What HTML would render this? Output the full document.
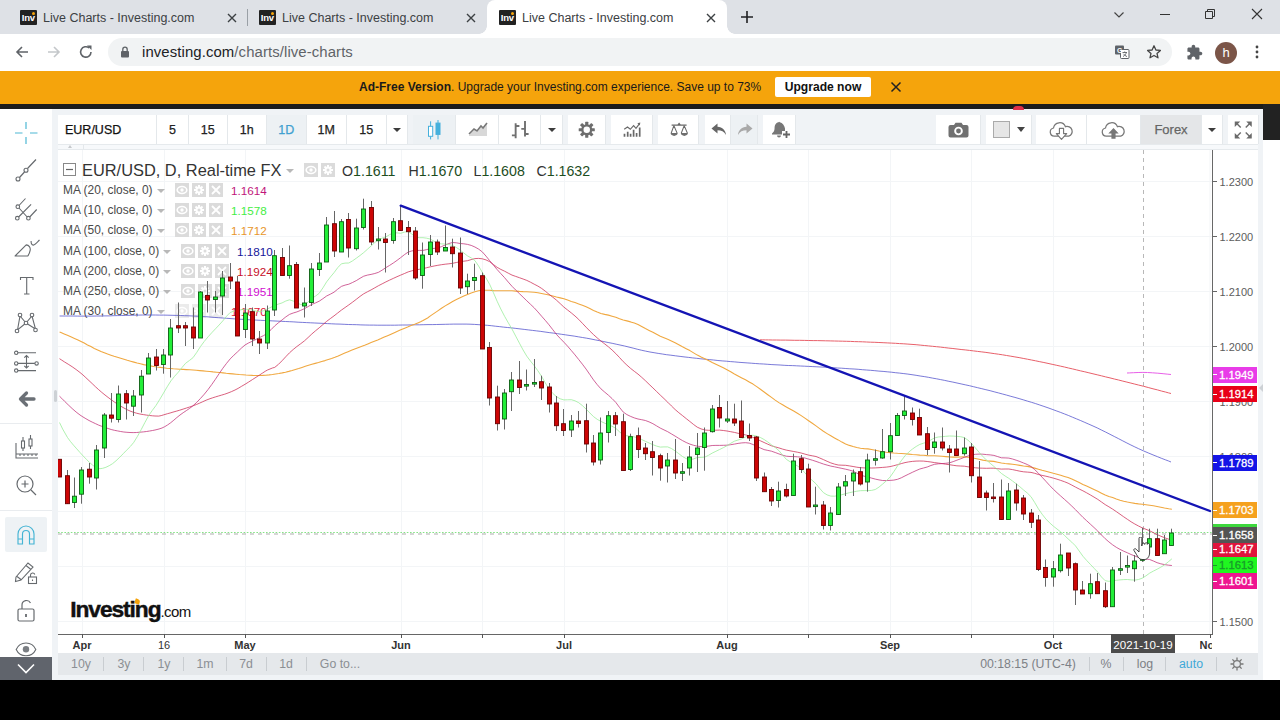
<!DOCTYPE html>
<html><head><meta charset="utf-8"><title>Live Charts - Investing.com</title>
<style>
*{box-sizing:border-box}
html,body{margin:0;padding:0}
body{width:1280px;height:720px;overflow:hidden;position:relative;background:#fff;font-family:"Liberation Sans",sans-serif;color:#333}
.abs{position:absolute}
/* browser chrome */
#tabs{left:0;top:0;width:1280px;height:34px;background:#dee1e6}
.tab{position:absolute;top:0;height:34px;width:240px}
.tab .fav{position:absolute;left:12px;top:9.5px;width:16.5px;height:15.5px;background:#222;border-radius:1px;color:#fff;font-size:9.5px;font-weight:bold;line-height:16px;letter-spacing:-.6px;text-align:center;letter-spacing:-.3px}
.tab .fav i{position:absolute;right:2px;top:2px;width:3px;height:3px;background:#f5a30a;border-radius:2px}
.tab .tt{position:absolute;left:35px;top:10.5px;font-size:12.5px;color:#3c4043;white-space:nowrap}
.tab .x{position:absolute;left:218px;top:11.5px;width:12px;height:12px}
.tab.act{background:#fff;border-radius:8px 8px 0 0}
#addr{left:0;top:34px;width:1280px;height:37px;background:#fff}
#pill{left:108px;top:38px;width:1064px;height:28px;border-radius:14px;background:#f1f3f4}
#url{left:142px;top:43.5px;font-size:14.9px;color:#5f6368;white-space:nowrap;letter-spacing:.1px}
#url b{font-weight:normal;color:#202124}
#banner{left:0;top:71px;width:1280px;height:33px;background:#f5a40c}
#banner .t{position:absolute;left:359px;top:9px;font-size:12px;color:#1a1a1a;white-space:nowrap}
#banner .btn{position:absolute;left:775px;top:6px;width:96px;height:20px;background:#fff;border-radius:2px;font-size:12.1px;font-weight:bold;color:#111;text-align:center;line-height:20px}
#black{left:0;top:104px;width:1280px;height:5px;background:#1c1c1c}
#dark2{left:1263px;top:104px;width:17px;height:36px;background:#222}
#bottomblack{left:0;top:680px;width:1280px;height:40px;background:#000}
/* widget */
#widget{left:0;top:109px;width:1263px;height:571px;background:#f0f3f6}
#side{left:0;top:109px;width:52px;height:571px;background:#fff}
#sidebtn{left:0;top:657px;width:52px;height:23px;background:#60646c}
.tb{position:absolute;top:115px;height:29px;background:#fff;border-right:1px solid #e4e8eb}
.tb.sel{background:#edf1f4}
.tb span{position:absolute;left:0;right:0;top:8px;text-align:center;font-size:12.5px;color:#222;-webkit-text-stroke:.25px currentColor}
#chartbg{left:58px;top:150px;width:1200px;height:503px;background:#fff}
#axisline{left:1212px;top:150px;width:1px;height:484px;background:#686868}
#timeline{left:58px;top:633.5px;width:1155px;height:1.5px;background:#666}
.pl{position:absolute;left:1219.5px;font-size:11px;color:#5c5c5c;white-space:nowrap}
.tick{position:absolute;left:1213px;width:4px;height:1px;background:#666}
.tag{position:absolute;left:1213px;width:44px;height:16px;color:#fff;font-size:11.3px;line-height:16px;padding-left:6px;white-space:nowrap;-webkit-text-stroke:.3px currentColor}
.tag:before{content:'';position:absolute;left:0;top:7.5px;width:3.5px;height:1px;background:currentColor}
.tl{position:absolute;top:639px;font-size:11px;color:#333;white-space:nowrap;transform:translateX(-50%)}
.tl.b{font-weight:bold}
.ttick{position:absolute;top:634px;width:1px;height:4px;background:#555}
#botbar{left:58px;top:653px;width:1200px;height:22px;background:#e5e8eb}
#botbar span{position:absolute;top:4px;font-size:12.3px;color:#8b8f94;white-space:nowrap;transform:translateX(-50%)}
#botbar i{position:absolute;top:4px;width:1px;height:14px;background:#c9cdd1}
.lg{position:absolute;left:60px;height:19px;white-space:nowrap;font-size:11.95px;color:#4a4a4a;line-height:19px;padding-left:3px}
.lg .v{position:absolute;top:0}
.ic{position:absolute;top:2px;width:14px;height:14px;background:#dbdbdb}
.ic svg{display:block}
.ic.f{opacity:.55}
.dd{position:absolute;top:8px;width:0;height:0;border-left:4px solid transparent;border-right:4px solid transparent;border-top:4px solid #b8b8b8}
</style></head><body>
<div id="tabs" class="abs">
 <div class="tab" style="left:8px"><div class="fav">Inv<i></i></div><div class="tt">Live Charts - Investing.com</div><svg class="x" viewBox="0 0 12 12"><path d="M2 2L10 10M10 2L2 10" stroke="#3c4043" stroke-width="1.4"/></svg></div>
 <div class="tab" style="left:247px"><div class="fav">Inv<i></i></div><div class="tt">Live Charts - Investing.com</div><svg class="x" viewBox="0 0 12 12"><path d="M2 2L10 10M10 2L2 10" stroke="#3c4043" stroke-width="1.4"/></svg></div>
 <div class="abs" style="left:247px;top:9px;width:1px;height:17px;background:#9aa0a6"></div>
 <div class="tab act" style="left:487px"><div class="fav">Inv<i></i></div><div class="tt">Live Charts - Investing.com</div><svg class="x" viewBox="0 0 12 12"><path d="M2 2L10 10M10 2L2 10" stroke="#3c4043" stroke-width="1.4"/></svg></div>
 <div class="abs" style="left:479px;top:26px;width:8px;height:8px;background:radial-gradient(circle at 0 0,#dee1e6 7.5px,#fff 8px)"></div><div class="abs" style="left:727px;top:26px;width:8px;height:8px;background:radial-gradient(circle at 100% 0,#dee1e6 7.5px,#fff 8px)"></div>
 <svg class="abs" style="left:739px;top:9px" width="16" height="16" viewBox="0 0 16 16"><path d="M8 2V14M2 8H14" stroke="#202124" stroke-width="1.6"/></svg>
 <svg class="abs" style="left:1113px;top:9px" width="12" height="12" viewBox="0 0 12 12"><path d="M1.5 3.5L6 8L10.5 3.5" stroke="#444" stroke-width="1.2" fill="none"/></svg>
 <div class="abs" style="left:1160px;top:14px;width:10px;height:1px;background:#333"></div>
 <svg class="abs" style="left:1204px;top:8px" width="12" height="12" viewBox="0 0 12 12"><path d="M1.5 3.5H8.5V10.5H1.5ZM3.5 3.5V1.5H10.5V8.5H8.5" stroke="#333" stroke-width="1" fill="none"/></svg>
 <svg class="abs" style="left:1251px;top:8px" width="12" height="12" viewBox="0 0 12 12"><path d="M1 1L11 11M11 1L1 11" stroke="#333" stroke-width="1.1"/></svg>
</div>
<div id="addr" class="abs"></div>
<svg class="abs" style="left:14px;top:44px" width="16" height="16" viewBox="0 0 16 16"><path d="M14 8H3M8 3L3 8L8 13" stroke="#5f6368" stroke-width="1.6" fill="none"/></svg>
<svg class="abs" style="left:46px;top:44px" width="16" height="16" viewBox="0 0 16 16"><path d="M2 8H13M8 3L13 8L8 13" stroke="#c4c7ca" stroke-width="1.6" fill="none"/></svg>
<svg class="abs" style="left:78px;top:44px" width="16" height="16" viewBox="0 0 16 16"><path d="M13 8A5.2 5.2 0 1 1 11.2 4" stroke="#5f6368" stroke-width="1.6" fill="none"/><path d="M9 1.5H13.5V6Z" fill="#5f6368"/></svg>
<div id="pill" class="abs"></div>
<svg class="abs" style="left:120px;top:46px" width="10" height="12" viewBox="0 0 10 12"><rect x="1" y="5" width="8" height="6.5" rx="1" fill="#5f6368"/><path d="M2.8 5V3.4a2.2 2.2 0 0 1 4.4 0V5" stroke="#5f6368" stroke-width="1.3" fill="none"/></svg>
<div id="url" class="abs"><b>investing.com</b>/charts/live-charts</div>
<svg class="abs" style="left:1114px;top:44px" width="16" height="16" viewBox="0 0 16 16"><rect x="1" y="1.5" width="9" height="9" rx="1" fill="#5f6368"/><rect x="6.5" y="5.5" width="8.5" height="9" rx="1" fill="#fff" stroke="#5f6368" stroke-width="1"/><text x="3" y="9" font-size="7" fill="#fff" font-family="Liberation Sans" font-weight="bold">G</text><path d="M8.5 8.5H13M10.7 7.5V8.5M9 12.5C11 11.5 12 10 12.3 8.5M9.5 9.8C10.3 11 11.5 12 13 12.6" stroke="#5f6368" stroke-width=".9" fill="none"/></svg>
<svg class="abs" style="left:1146px;top:44px" width="16" height="16" viewBox="0 0 16 16"><path d="M8 1.8L9.9 6l4.5.4-3.4 3 1 4.4L8 11.5 4 13.8l1-4.4-3.4-3L6.1 6Z" stroke="#444" stroke-width="1.3" fill="none" stroke-linejoin="round"/></svg>
<svg class="abs" style="left:1185.5px;top:43.5px" width="17" height="17" viewBox="0 0 24 24"><path d="M20.5 11H19V7c0-1.100-.9-2-2-2h-4V3.500C13 2.120 11.880 1 10.500 1S8 2.120 8 3.500V5H4c-1.100 0-1.990.9-1.990 2v3.800H3.500c1.490 0 2.700 1.210 2.700 2.700s-1.210 2.700-2.700 2.700H2V20c0 1.100.9 2 2 2h3.800v-1.500c0-1.490 1.210-2.700 2.700-2.700 1.490 0 2.700 1.210 2.700 2.700V22H17c1.100 0 2-.9 2-2v-4h1.500c1.380 0 2.500-1.120 2.500-2.500S21.880 11 20.500 11z" fill="#5f6368"/></svg>
<div class="abs" style="left:1215px;top:41.5px;width:22px;height:22px;border-radius:11px;background:#7b5548;color:#fff;font-size:13px;text-align:center;line-height:21px">h</div>
<svg class="abs" style="left:1254px;top:44px" width="6" height="16" viewBox="0 0 6 16"><circle cx="3" cy="3" r="1.4" fill="#444"/><circle cx="3" cy="8" r="1.4" fill="#444"/><circle cx="3" cy="13" r="1.4" fill="#444"/></svg>
<div id="banner" class="abs"><div class="t"><b>Ad-Free Version</b>. Upgrade your Investing.com experience. Save up to 73%</div><div class="btn">Upgrade now</div>
<svg class="abs" style="left:890px;top:10px" width="12" height="12" viewBox="0 0 12 12"><path d="M1.5 1.5L10.5 10.5M10.5 1.5L1.5 10.5" stroke="#222" stroke-width="1.5"/></svg></div>
<div id="black" class="abs"></div>
<div id="dark2" class="abs"></div>
<div id="widget" class="abs"></div>
<div id="side" class="abs"></div>
<div id="chartbg" class="abs"></div>

<div class="tb" style="left:58px;width:99px;"><span style="text-align:left;left:7px;font-size:12.5px;color:#111">EUR/USD</span></div>
<div class="tb" style="left:157px;width:32px;"><span>5</span></div>
<div class="tb" style="left:189px;width:38.5px;"><span>15</span></div>
<div class="tb" style="left:227.5px;width:39.5px;"><span>1h</span></div>
<div class="tb sel" style="left:267px;width:39.5px;"><span style="color:#3fa0d0">1D</span></div>
<div class="tb" style="left:306.5px;width:40.5px;"><span>1M</span></div>
<div class="tb" style="left:347px;width:39.5px;"><span>15</span></div>
<div class="tb" style="left:386.5px;width:21px;"><div style="position:absolute;left:50%;top:12.5px;margin-left:-4px;width:0;height:0;border-left:4px solid transparent;border-right:4px solid transparent;border-top:4.2px solid #3c3c3c"></div></div>
<div class="tb sel" style="left:413px;width:42.5px;"><svg style="position:absolute;left:0;top:0" width="42" height="29" viewBox="0 0 42 29"><path d="M17.6 6.300V11.300M17.600 21.200V24.400M25 5V8M25 19.400V24.400" stroke="#45b0dc" stroke-width="1"/><rect x="15.500" y="11.300" width="4.200" height="10" fill="#fff" stroke="#45b0dc" stroke-width="1"/><rect x="23" y="8.100" width="4" height="11.300" fill="#45b0dc" stroke="#45b0dc" stroke-width="1"/></svg></div>
<div class="tb" style="left:455.5px;width:43px;"><svg style="position:absolute;left:12px;top:7px" width="20" height="16" viewBox="0 0 20 16"><path d="M1 13L6 8L9 10L13 5L15 7L19 2V14H1Z" fill="#d8d8d8"/><path d="M1 12L6 7L9 9L13 4L15 6L19 1" stroke="#777" stroke-width="1.6" fill="none"/></svg></div>
<div class="tb" style="left:498.5px;width:42.5px;"><svg style="position:absolute;left:0;top:0" width="42" height="29" viewBox="0 0 42 29"><path d="M16.650 8.200V23.300M16.650 11H20.400M12.900 20.400H16.650M26 5.900V21.400M22.300 13.900H26M26 19H29.600" stroke="#707070" stroke-width="1.9" fill="none"/></svg></div>
<div class="tb" style="left:541px;width:22px;"><div style="position:absolute;left:50%;top:12.5px;margin-left:-4px;width:0;height:0;border-left:4px solid transparent;border-right:4px solid transparent;border-top:4.2px solid #3c3c3c"></div></div>
<div class="tb" style="left:567.5px;width:38px;"><svg style="position:absolute;left:10.2px;top:5.9px" width="17.5" height="17.5" viewBox="0 0 20 20"><g fill="#6e6e6e"><circle cx="10" cy="10" r="6.3"/><rect x="8.2" y="0.8" width="3.6" height="18.4" rx="0.6" transform="rotate(0 10 10)"/><rect x="8.2" y="0.8" width="3.6" height="18.4" rx="0.6" transform="rotate(45 10 10)"/><rect x="8.2" y="0.8" width="3.6" height="18.4" rx="0.6" transform="rotate(90 10 10)"/><rect x="8.2" y="0.8" width="3.6" height="18.4" rx="0.6" transform="rotate(135 10 10)"/></g><circle cx="10" cy="10" r="3.700" fill="#fff"/></svg></div>
<div class="tb" style="left:610.5px;width:42px;"><svg style="position:absolute;left:0;top:0" width="42" height="29" viewBox="0 0 42 29"><path d="M13.500 21.800V18.700M16.700 21.800V16.700M19.600 21.800V18.700M22.600 21.800V14.800M25.600 21.800V18.100M28.700 21.800V12.500" stroke="#686868" stroke-width="1.700"/><path d="M13.200 14.300L16.500 12L19.300 14.300L22.600 10.600L25 13.400L28.700 8.300" stroke="#686868" stroke-width="1.150" fill="none"/><path d="M26.300 8.200L29.300 7.500L28.900 10.600Z" fill="#686868"/></svg></div>
<div class="tb" style="left:657.5px;width:41.5px;"><svg style="position:absolute;left:0;top:0" width="42" height="29" viewBox="0 0 42 29"><path d="M13.600 10.100H28.600M19.800 10.100L21.100 8.500L22.400 10.100" stroke="#686868" stroke-width="1.200" fill="none"/><path d="M15.900 10.600L13.200 18.100M15.900 10.600L19.100 18.100M26.200 10.600L23.300 18.100M26.200 10.600L29.400 18.100" stroke="#686868" stroke-width="1.100" fill="none"/><path d="M12.600 18.100H19.700C19.700 21.800 12.600 21.800 12.600 18.100ZM22.800 18.100H29.900C29.900 21.800 22.800 21.800 22.800 18.100Z" fill="#6e6e6e"/></svg></div>
<div class="tb" style="left:704.5px;width:26px;"><svg style="position:absolute;left:6px;top:8px" width="16" height="13" viewBox="0 0 16 13"><path d="M6.5 0.5L0.5 5.5L6.5 10.5V7.3C10.5 7.3 13 8.7 15 12C14.6 7.2 11.5 4 6.5 3.7Z" fill="#666"/></svg></div>
<div class="tb sel" style="left:730.5px;width:27px;"><svg style="position:absolute;left:6px;top:8px" width="16" height="13" viewBox="0 0 16 13"><path d="M9.5 0.5L15.5 5.5L9.5 10.5V7.3C5.5 7.3 3 8.7 1 12C1.4 7.2 4.5 4 9.5 3.7Z" fill="#a9a9a9"/></svg></div>
<div class="tb" style="left:762.5px;width:33px;"><svg style="position:absolute;left:8px;top:6px" width="20" height="18" viewBox="0 0 20 18"><path d="M7.5 1.2C4.5 1.8 3.6 4.5 3.6 7C3.6 10 2.4 11.3 1 12.6V13.6H11V10H14V7.5C13.6 4.5 11.5 1.8 8.8 1.2A0.9 0.9 0 0 0 7.5 1.2Z" fill="#777"/><path d="M6 14.6A2 2 0 0 0 10 14.6Z" fill="#777"/><path d="M15.5 10V17M12 13.5H19" stroke="#666" stroke-width="1.8"/></svg></div>
<div class="tb" style="left:935.5px;width:45px;"><svg style="position:absolute;left:12px;top:7px" width="21" height="16" viewBox="0 0 21 16"><path d="M2.5 3H6L7.5 0.8H13.5L15 3H18.5A2 2 0 0 1 20.5 5V13.5A2 2 0 0 1 18.5 15.5H2.5A2 2 0 0 1 .5 13.5V5A2 2 0 0 1 2.5 3Z" fill="#707070"/><circle cx="10.5" cy="9" r="4.3" fill="#fff"/><circle cx="10.5" cy="9" r="2.4" fill="#707070"/></svg></div>
<div class="tb" style="left:985.5px;width:46px;"><div style="position:absolute;left:7px;top:6px;width:17px;height:17px;background:#e6e6e6;border:1px solid #aaa"></div><div style="position:absolute;left:31px;top:12px;width:0;height:0;border-left:4.5px solid transparent;border-right:4.5px solid transparent;border-top:5px solid #444"></div></div>
<div class="tb" style="left:1036px;width:51px;"><svg style="position:absolute;left:12px;top:5px" width="27" height="21" viewBox="0 0 26 20"><path d="M6 15.5A4 4 0 0 1 5.3 7.6A6 6 0 0 1 16.8 6.3A4.7 4.7 0 0 1 20 15.5Z" fill="#fff" stroke="#777" stroke-width="1.2"/><path d="M11 8H15V13H18L13 18.5L8 13H11Z" fill="#fff" stroke="#777" stroke-width="1.1" stroke-linejoin="round"/></svg></div>
<div class="tb" style="left:1087px;width:54px;"><svg style="position:absolute;left:13px;top:5px" width="27" height="21" viewBox="0 0 26 20"><path d="M6 15.5A4 4 0 0 1 5.3 7.6A6 6 0 0 1 16.8 6.3A4.7 4.7 0 0 1 20 15.5Z" fill="#fff" stroke="#777" stroke-width="1.2"/><path d="M11 18V13H8L13 7.5L18 13H15V18Z" fill="#777"/></svg></div>
<div class="tb sel" style="left:1141px;width:61px;background:#e4e6e8;"><span style="color:#666;font-size:13px;top:7px">Forex</span></div>
<div class="tb" style="left:1202px;width:21px;"><div style="position:absolute;left:50%;top:12.5px;margin-left:-4px;width:0;height:0;border-left:4px solid transparent;border-right:4px solid transparent;border-top:4.2px solid #3c3c3c"></div></div>
<div class="tb" style="left:1227.5px;width:31.5px;"><svg style="position:absolute;left:6.500px;top:6px" width="18.500" height="18" viewBox="0 0 18 18"><g fill="#6a6a6a" stroke="#6a6a6a" stroke-width="1.500"><path d="M0.500 0.500H6L0.500 6Z" stroke="none"/><path d="M2.500 2.500L6.500 6.500"/><path d="M17.500 0.500H12L17.500 6Z" stroke="none"/><path d="M15.500 2.500L11.500 6.500"/><path d="M0.500 17.500H6L0.500 12Z" stroke="none"/><path d="M2.500 15.500L6.500 11.500"/><path d="M17.500 17.500H12L17.500 12Z" stroke="none"/><path d="M15.500 15.500L11.500 11.500"/></g></svg></div>
<div class="abs" style="left:58px;top:144px;width:1200px;height:6px;background:#f7f9fb;border-top:1px solid #e6eaed;border-bottom:1px solid #e6eaed"></div>
<div class="abs" style="left:83px;top:145px;width:1px;height:4px;background:#e4e8eb"></div>
<div class="abs" style="left:67.500px;top:145.300px;width:0;height:0;border-left:2.800px solid transparent;border-right:2.800px solid transparent;border-bottom:3.400px solid #c6c9cc"></div>
<div id="axisline" class="abs"></div><div id="timeline" class="abs"></div>
<div class="pl" style="top:175.5px">1.2300</div><div class="tick" style="top:181px"></div>
<div class="pl" style="top:230.5px">1.2200</div><div class="tick" style="top:236px"></div>
<div class="pl" style="top:285.5px">1.2100</div><div class="tick" style="top:291px"></div>
<div class="pl" style="top:340.5px">1.2000</div><div class="tick" style="top:346px"></div>
<div class="pl" style="top:395.5px">1.1900</div><div class="tick" style="top:401px"></div>
<div class="pl" style="top:450.5px">1.1800</div><div class="tick" style="top:456px"></div>
<div class="pl" style="top:615.5px">1.1500</div><div class="tick" style="top:621px"></div>
<div class="abs" style="left:1213px;top:524px;width:44px;height:5px;background:#3ed83e"></div>
<div class="tag" style="top:366.5px;background:#e83ce8;color:#fff">1.1949</div>
<div class="tag" style="top:386px;background:#e80018;color:#fff">1.1914</div>
<div class="tag" style="top:454.5px;background:#1414e6;color:#fff">1.1789</div>
<div class="tag" style="top:502px;background:#f5a11e;color:#fff">1.1703</div>
<div class="tag" style="top:557px;background:#20f620;color:#179a2a">1.1613</div>
<div class="tag" style="top:573px;background:#ee1490;color:#fff">1.1601</div>
<div class="tag" style="top:541px;background:#e0143c;color:#fff">1.1647</div>
<div class="tag" style="top:527px;background:#545454">1.1658</div>
<div class="tl b" style="left:82px">Apr</div>
<div class="tl" style="left:164px">16</div>
<div class="tl b" style="left:245px">May</div>
<div class="tl b" style="left:401px">Jun</div>
<div class="tl b" style="left:564px">Jul</div>
<div class="tl b" style="left:727px">Aug</div>
<div class="tl b" style="left:890px">Sep</div>
<div class="tl b" style="left:1053px">Oct</div>
<div class="tl b" style="left:1210px;clip-path:inset(0 8.5px 0 0)">Nov</div>
<div class="ttick" style="left:82px"></div>
<div class="ttick" style="left:164px"></div>
<div class="ttick" style="left:245px"></div>
<div class="ttick" style="left:401px"></div>
<div class="ttick" style="left:482px"></div>
<div class="ttick" style="left:564px"></div>
<div class="ttick" style="left:727px"></div>
<div class="ttick" style="left:808px"></div>
<div class="ttick" style="left:890px"></div>
<div class="ttick" style="left:971px"></div>
<div class="ttick" style="left:1053px"></div>
<div class="ttick" style="left:1209.5px"></div>
<div class="abs" style="left:1111px;top:634px;width:64px;height:19px;background:#4c4c4c;color:#fff;font-size:11.6px;line-height:21px;text-align:center;white-space:nowrap">2021-10-19</div>
<div id="botbar" class="abs">
<span style="left:23px">10y</span>
<span style="left:66px">3y</span>
<span style="left:106px">1y</span>
<span style="left:147px">1m</span>
<span style="left:188px">7d</span>
<span style="left:228px">1d</span>
<span style="left:282px">Go to...</span>
<i style="left:45px"></i>
<i style="left:85px"></i>
<i style="left:125px"></i>
<i style="left:168px"></i>
<i style="left:208px"></i>
<i style="left:248px"></i>
<span style="left:970px;color:#7d8186">00:18:15 (UTC-4)</span>
<span style="left:1048px;color:#7d8186">%</span>
<span style="left:1087px;color:#7d8186">log</span>
<span style="left:1133px;color:#3fa9d8">auto</span>
<i style="left:1031px"></i>
<i style="left:1065px"></i>
<i style="left:1107px"></i>
<i style="left:1158px"></i>
<svg style="position:absolute;left:1172px;top:4px" width="14" height="14" viewBox="0 0 14 14"><circle cx="7" cy="7" r="3.4" fill="none" stroke="#777" stroke-width="1.2"/><path d="M7 0.5V3M7 11V13.5M0.5 7H3M11 7H13.5M2.4 2.4L4.2 4.2M9.8 9.8L11.6 11.6M11.6 2.4L9.8 4.2M4.2 9.8L2.4 11.6" stroke="#777" stroke-width="1.3"/></svg>
</div>
<svg width="1154" height="484" viewBox="0 0 1154 484" style="position:absolute;left:58px;top:150px">
<line x1="0" y1="31.5" x2="1154" y2="31.5" stroke="#f3f5f7" stroke-width="1"/>
<line x1="0" y1="86.5" x2="1154" y2="86.5" stroke="#f3f5f7" stroke-width="1"/>
<line x1="0" y1="141.5" x2="1154" y2="141.5" stroke="#f3f5f7" stroke-width="1"/>
<line x1="0" y1="196.5" x2="1154" y2="196.5" stroke="#f3f5f7" stroke-width="1"/>
<line x1="0" y1="251.5" x2="1154" y2="251.5" stroke="#f3f5f7" stroke-width="1"/>
<line x1="0" y1="306.5" x2="1154" y2="306.5" stroke="#f3f5f7" stroke-width="1"/>
<line x1="0" y1="361.5" x2="1154" y2="361.5" stroke="#f3f5f7" stroke-width="1"/>
<line x1="0" y1="416.5" x2="1154" y2="416.5" stroke="#f3f5f7" stroke-width="1"/>
<line x1="0" y1="471.5" x2="1154" y2="471.5" stroke="#f3f5f7" stroke-width="1"/>
<line x1="24.5" y1="0" x2="24.5" y2="484" stroke="#f3f5f7" stroke-width="1"/>
<line x1="106.5" y1="0" x2="106.5" y2="484" stroke="#f3f5f7" stroke-width="1"/>
<line x1="187.5" y1="0" x2="187.5" y2="484" stroke="#f3f5f7" stroke-width="1"/>
<line x1="343.5" y1="0" x2="343.5" y2="484" stroke="#f3f5f7" stroke-width="1"/>
<line x1="424.5" y1="0" x2="424.5" y2="484" stroke="#f3f5f7" stroke-width="1"/>
<line x1="506.5" y1="0" x2="506.5" y2="484" stroke="#f3f5f7" stroke-width="1"/>
<line x1="669.5" y1="0" x2="669.5" y2="484" stroke="#f3f5f7" stroke-width="1"/>
<line x1="750.5" y1="0" x2="750.5" y2="484" stroke="#f3f5f7" stroke-width="1"/>
<line x1="832.5" y1="0" x2="832.5" y2="484" stroke="#f3f5f7" stroke-width="1"/>
<line x1="913.5" y1="0" x2="913.5" y2="484" stroke="#f3f5f7" stroke-width="1"/>
<line x1="995.5" y1="0" x2="995.5" y2="484" stroke="#f3f5f7" stroke-width="1"/>
<line x1="1152.0" y1="0" x2="1152.0" y2="484" stroke="#f3f5f7" stroke-width="1"/>
</svg>
<div class="lg" style="top:159px;height:23px;width:540px;background:none;font-size:16.4px;line-height:22px;color:#333;padding-left:0"><svg style="position:absolute;left:3px;top:4px" width="13" height="13" viewBox="0 0 13 13"><rect x=".5" y=".5" width="12" height="12" fill="#fff" stroke="#888"/><path d="M3 6.5H10" stroke="#666" stroke-width="1.2"/></svg><span style="position:absolute;left:22px;top:0">EUR/USD, D, Real-time FX</span><div class="dd" style="left:226px;top:10px"></div><div class="ic" style="left:244px;top:4px"><svg width="14" height="14" viewBox="0 0 14 14"><ellipse cx="7" cy="7" rx="4.800" ry="3.500" fill="none" stroke="#fff" stroke-width="1.600"/><circle cx="7" cy="7" r="1.700" fill="#fff"/></svg></div><div class="ic" style="left:261px;top:4px"><svg width="14" height="14" viewBox="0 0 14 14"><g stroke="#fff" stroke-width="2"><path d="M7 2V12M2 7H12M3.5 3.5L10.5 10.5M10.5 3.5L3.5 10.5"/></g><circle cx="7" cy="7" r="3.4" fill="#fff"/><circle cx="7" cy="7" r="1.5" fill="#dcdcdc"/></svg></div><span style="position:absolute;left:282px;top:1px;font-size:14.2px;color:#333;word-spacing:-1px"><span style="position:absolute;left:0">O<span style="color:#1d4d1d">1.1611</span></span><span style="position:absolute;left:66.5px">H<span style="color:#1d4d1d">1.1670</span></span><span style="position:absolute;left:131.5px">L<span style="color:#1d4d1d">1.1608</span></span><span style="position:absolute;left:194.5px">C<span style="color:#1d4d1d">1.1632</span></span></span></div>
<div class="lg" style="top:181px;width:215px">MA (20, close, 0)<div class="dd" style="left:97px"></div><div class="ic" style="left:115px"><svg width="14" height="14" viewBox="0 0 14 14"><ellipse cx="7" cy="7" rx="4.800" ry="3.500" fill="none" stroke="#fff" stroke-width="1.600"/><circle cx="7" cy="7" r="1.700" fill="#fff"/></svg></div><div class="ic" style="left:132px"><svg width="14" height="14" viewBox="0 0 14 14"><g stroke="#fff" stroke-width="2"><path d="M7 2V12M2 7H12M3.5 3.5L10.5 10.5M10.5 3.5L3.5 10.5"/></g><circle cx="7" cy="7" r="3.4" fill="#fff"/><circle cx="7" cy="7" r="1.5" fill="#dcdcdc"/></svg></div><div class="ic" style="left:149px"><svg width="14" height="14" viewBox="0 0 14 14"><path d="M3 3L11 11M11 3L3 11" stroke="#fff" stroke-width="1.800"/></svg></div><span class="v" style="left:171px;color:#c0157a;font-size:11.7px">1.1614</span></div>
<div class="lg" style="top:201px;width:215px">MA (10, close, 0)<div class="dd" style="left:97px"></div><div class="ic" style="left:115px"><svg width="14" height="14" viewBox="0 0 14 14"><ellipse cx="7" cy="7" rx="4.800" ry="3.500" fill="none" stroke="#fff" stroke-width="1.600"/><circle cx="7" cy="7" r="1.700" fill="#fff"/></svg></div><div class="ic" style="left:132px"><svg width="14" height="14" viewBox="0 0 14 14"><g stroke="#fff" stroke-width="2"><path d="M7 2V12M2 7H12M3.5 3.5L10.5 10.5M10.5 3.5L3.5 10.5"/></g><circle cx="7" cy="7" r="3.4" fill="#fff"/><circle cx="7" cy="7" r="1.5" fill="#dcdcdc"/></svg></div><div class="ic" style="left:149px"><svg width="14" height="14" viewBox="0 0 14 14"><path d="M3 3L11 11M11 3L3 11" stroke="#fff" stroke-width="1.800"/></svg></div><span class="v" style="left:171px;color:#44ee44;font-size:11.7px">1.1578</span></div>
<div class="lg" style="top:221px;width:215px">MA (50, close, 0)<div class="dd" style="left:97px"></div><div class="ic" style="left:115px"><svg width="14" height="14" viewBox="0 0 14 14"><ellipse cx="7" cy="7" rx="4.800" ry="3.500" fill="none" stroke="#fff" stroke-width="1.600"/><circle cx="7" cy="7" r="1.700" fill="#fff"/></svg></div><div class="ic" style="left:132px"><svg width="14" height="14" viewBox="0 0 14 14"><g stroke="#fff" stroke-width="2"><path d="M7 2V12M2 7H12M3.5 3.5L10.5 10.5M10.5 3.5L3.5 10.5"/></g><circle cx="7" cy="7" r="3.4" fill="#fff"/><circle cx="7" cy="7" r="1.5" fill="#dcdcdc"/></svg></div><div class="ic" style="left:149px"><svg width="14" height="14" viewBox="0 0 14 14"><path d="M3 3L11 11M11 3L3 11" stroke="#fff" stroke-width="1.800"/></svg></div><span class="v" style="left:171px;color:#e8962a;font-size:11.7px">1.1712</span></div>
<div class="lg" style="top:241.5px;width:221px">MA (100, close, 0)<div class="dd" style="left:103px"></div><div class="ic" style="left:121px"><svg width="14" height="14" viewBox="0 0 14 14"><ellipse cx="7" cy="7" rx="4.800" ry="3.500" fill="none" stroke="#fff" stroke-width="1.600"/><circle cx="7" cy="7" r="1.700" fill="#fff"/></svg></div><div class="ic" style="left:138px"><svg width="14" height="14" viewBox="0 0 14 14"><g stroke="#fff" stroke-width="2"><path d="M7 2V12M2 7H12M3.5 3.5L10.5 10.5M10.5 3.5L3.5 10.5"/></g><circle cx="7" cy="7" r="3.4" fill="#fff"/><circle cx="7" cy="7" r="1.5" fill="#dcdcdc"/></svg></div><div class="ic" style="left:155px"><svg width="14" height="14" viewBox="0 0 14 14"><path d="M3 3L11 11M11 3L3 11" stroke="#fff" stroke-width="1.800"/></svg></div><span class="v" style="left:177px;color:#14149a;font-size:11.7px">1.1810</span></div>
<div class="lg" style="top:261.5px;width:221px">MA (200, close, 0)<div class="dd" style="left:103px"></div><div class="ic" style="left:121px"><svg width="14" height="14" viewBox="0 0 14 14"><ellipse cx="7" cy="7" rx="4.800" ry="3.500" fill="none" stroke="#fff" stroke-width="1.600"/><circle cx="7" cy="7" r="1.700" fill="#fff"/></svg></div><div class="ic" style="left:138px"><svg width="14" height="14" viewBox="0 0 14 14"><g stroke="#fff" stroke-width="2"><path d="M7 2V12M2 7H12M3.5 3.5L10.5 10.5M10.5 3.5L3.5 10.5"/></g><circle cx="7" cy="7" r="3.4" fill="#fff"/><circle cx="7" cy="7" r="1.5" fill="#dcdcdc"/></svg></div><div class="ic" style="left:155px"><svg width="14" height="14" viewBox="0 0 14 14"><path d="M3 3L11 11M11 3L3 11" stroke="#fff" stroke-width="1.800"/></svg></div><span class="v" style="left:177px;color:#c8102a;font-size:11.7px">1.1924</span></div>
<div class="lg" style="top:281.5px;width:221px">MA (250, close, 0)<div class="dd" style="left:103px"></div><div class="ic" style="left:121px"><svg width="14" height="14" viewBox="0 0 14 14"><ellipse cx="7" cy="7" rx="4.800" ry="3.500" fill="none" stroke="#fff" stroke-width="1.600"/><circle cx="7" cy="7" r="1.700" fill="#fff"/></svg></div><div class="ic" style="left:138px"><svg width="14" height="14" viewBox="0 0 14 14"><g stroke="#fff" stroke-width="2"><path d="M7 2V12M2 7H12M3.5 3.5L10.5 10.5M10.5 3.5L3.5 10.5"/></g><circle cx="7" cy="7" r="3.4" fill="#fff"/><circle cx="7" cy="7" r="1.5" fill="#dcdcdc"/></svg></div><div class="ic" style="left:155px"><svg width="14" height="14" viewBox="0 0 14 14"><path d="M3 3L11 11M11 3L3 11" stroke="#fff" stroke-width="1.800"/></svg></div><span class="v" style="left:177px;color:#d010d0;font-size:11.7px">1.1951</span></div>
<div class="lg" style="top:301.5px;width:215px">MA (30, close, 0)<div class="dd" style="left:97px"></div><div class="ic f" style="left:115px"><svg width="14" height="14" viewBox="0 0 14 14"><ellipse cx="7" cy="7" rx="4.800" ry="3.500" fill="none" stroke="#fff" stroke-width="1.600"/><circle cx="7" cy="7" r="1.700" fill="#fff"/></svg></div><div class="ic f" style="left:132px"><svg width="14" height="14" viewBox="0 0 14 14"><g stroke="#fff" stroke-width="2"><path d="M7 2V12M2 7H12M3.5 3.5L10.5 10.5M10.5 3.5L3.5 10.5"/></g><circle cx="7" cy="7" r="3.4" fill="#fff"/><circle cx="7" cy="7" r="1.5" fill="#dcdcdc"/></svg></div><div class="ic f" style="left:149px"><svg width="14" height="14" viewBox="0 0 14 14"><path d="M3 3L11 11M11 3L3 11" stroke="#fff" stroke-width="1.800"/></svg></div><span class="v" style="left:171px;color:#e01434;font-size:11.7px">1.1670</span></div>
<svg class="chart" width="1154" height="484" viewBox="0 0 1154 484" style="position:absolute;left:58px;top:150px">
<line x1="0" y1="382.5" x2="1154" y2="382.5" stroke="#86e486" stroke-width="1" stroke-dasharray="1.6 1.6"/>
<line x1="0" y1="384" x2="1154" y2="384" stroke="#adadad" stroke-width="1" stroke-dasharray="4 4"/>
<line x1="1085.5" y1="0" x2="1085.5" y2="484" stroke="#b8b8b8" stroke-width="1" stroke-dasharray="4 4"/>
<path d="M1.6 166.0 L4.0 166.0 L7.2 166.0 L10.8 166.0 L15.0 166.0 L19.4 166.1 L24.1 166.1 L28.9 166.1 L33.8 166.1 L38.5 166.0 L43.0 166.0 L47.0 165.9 L51.1 165.9 L55.2 165.7 L59.4 165.6 L63.6 165.5 L67.8 165.4 L72.1 165.3 L76.3 165.2 L80.6 165.1 L84.8 165.0 L89.0 165.0 L93.2 165.0 L97.4 165.0 L101.5 165.1 L105.7 165.1 L109.9 165.2 L114.1 165.3 L118.2 165.4 L122.4 165.5 L126.6 165.7 L130.8 165.8 L135.0 166.0 L139.2 166.2 L143.4 166.5 L147.6 166.7 L151.9 167.0 L156.1 167.4 L160.3 167.7 L164.5 168.0 L168.8 168.3 L173.0 168.6 L177.2 168.9 L181.4 169.2 L185.6 169.4 L189.8 169.7 L194.0 169.9 L198.2 170.1 L202.4 170.3 L206.6 170.5 L210.7 170.7 L214.9 170.9 L219.1 171.1 L223.3 171.3 L227.5 171.5 L231.7 171.7 L235.9 171.9 L240.1 172.2 L244.3 172.4 L248.5 172.6 L252.6 172.8 L256.8 173.0 L261.0 173.2 L265.2 173.4 L269.4 173.6 L273.6 173.8 L277.8 174.0 L282.0 174.1 L286.2 174.3 L290.4 174.5 L294.6 174.6 L298.7 174.7 L302.9 174.9 L307.1 175.0 L311.3 175.1 L315.5 175.1 L319.7 175.2 L323.9 175.2 L328.1 175.2 L332.3 175.2 L336.5 175.2 L340.6 175.1 L344.8 175.0 L349.0 175.0 L353.2 174.9 L357.4 174.8 L361.6 174.8 L365.8 174.7 L370.0 174.6 L374.3 174.6 L378.6 174.5 L383.0 174.4 L387.3 174.3 L391.6 174.2 L395.8 174.1 L400.0 174.1 L404.1 174.1 L408.1 174.1 L412.0 174.2 L416.5 174.4 L420.9 174.7 L425.1 175.0 L429.3 175.3 L433.3 175.7 L437.3 176.2 L441.3 176.6 L445.4 177.1 L449.5 177.5 L453.7 177.9 L457.8 178.4 L462.0 178.9 L466.2 179.4 L470.3 179.9 L474.5 180.4 L478.7 180.9 L482.8 181.4 L487.0 182.0 L491.2 182.6 L495.3 183.1 L499.5 183.7 L503.7 184.3 L507.8 184.9 L512.0 185.5 L516.2 186.1 L520.3 186.8 L524.5 187.5 L528.7 188.2 L533.0 189.0 L537.3 189.9 L541.6 190.7 L545.8 191.6 L550.1 192.5 L554.2 193.3 L558.2 194.2 L562.0 195.0 L566.6 196.0 L571.0 197.1 L575.1 198.1 L579.2 199.2 L583.3 200.2 L587.5 201.1 L592.0 202.0 L596.1 202.7 L600.2 203.4 L604.3 204.0 L608.5 204.7 L612.9 205.2 L617.4 205.8 L622.1 206.4 L627.0 207.0 L630.7 207.4 L634.6 207.9 L638.7 208.3 L642.8 208.8 L647.0 209.2 L651.3 209.6 L655.6 210.0 L659.9 210.5 L664.2 210.9 L668.4 211.2 L672.6 211.6 L676.7 211.9 L680.9 212.3 L685.0 212.6 L689.1 212.9 L693.3 213.2 L697.4 213.5 L701.5 213.8 L705.7 214.0 L709.8 214.3 L713.9 214.6 L718.0 214.8 L722.1 215.0 L726.2 215.3 L730.3 215.5 L734.4 215.6 L738.5 215.8 L742.5 216.0 L746.6 216.2 L750.7 216.4 L754.8 216.6 L758.9 216.8 L763.0 217.0 L767.1 217.2 L771.2 217.5 L775.4 217.7 L779.5 218.0 L783.6 218.2 L787.8 218.5 L791.9 218.8 L796.1 219.0 L800.2 219.3 L804.4 219.7 L808.5 220.0 L812.6 220.3 L816.8 220.7 L820.9 221.1 L825.1 221.4 L829.2 221.8 L833.4 222.2 L837.5 222.7 L841.6 223.1 L845.8 223.6 L849.9 224.1 L854.0 224.7 L858.1 225.3 L862.2 226.0 L866.3 226.6 L870.4 227.3 L874.5 228.1 L878.5 228.8 L882.6 229.6 L886.7 230.4 L890.8 231.3 L894.9 232.1 L899.0 233.0 L903.1 233.9 L907.2 234.8 L911.4 235.7 L915.5 236.7 L919.6 237.7 L923.8 238.7 L927.9 239.7 L932.1 240.7 L936.2 241.8 L940.4 242.9 L944.5 244.0 L948.6 245.1 L952.8 246.3 L956.9 247.4 L961.1 248.6 L965.2 249.8 L969.4 251.1 L973.5 252.3 L977.6 253.6 L981.8 255.0 L985.9 256.4 L990.0 257.8 L994.1 259.3 L998.2 260.8 L1002.3 262.3 L1006.4 263.9 L1010.5 265.5 L1014.5 267.2 L1018.6 268.9 L1022.7 270.6 L1026.8 272.4 L1030.9 274.2 L1035.0 276.0 L1039.2 277.9 L1043.4 280.0 L1047.7 282.1 L1052.0 284.3 L1056.3 286.5 L1060.6 288.7 L1064.8 290.9 L1068.9 293.0 L1072.9 295.0 L1076.8 296.9 L1080.4 298.6 L1085.3 300.8 L1090.2 302.9 L1095.0 304.9 L1099.5 306.7 L1103.7 308.4 L1107.4 309.8 L1110.6 311.0 L1113.0 312.0" fill="none" stroke="#4646c8" stroke-width="0.8" stroke-opacity="0.9" stroke-linejoin="round"/>
<path d="M702.0 189.8 L704.3 189.8 L707.2 189.9 L710.5 189.9 L714.3 190.0 L718.4 190.0 L722.8 190.1 L727.3 190.1 L732.0 190.2 L736.8 190.3 L741.6 190.3 L746.3 190.4 L750.8 190.5 L755.2 190.6 L759.3 190.6 L763.0 190.7 L767.7 190.8 L772.2 190.9 L776.5 191.0 L780.7 191.1 L784.7 191.2 L788.7 191.3 L792.6 191.4 L796.5 191.6 L800.4 191.7 L804.4 191.8 L808.5 192.0 L812.6 192.2 L816.8 192.3 L820.9 192.5 L825.1 192.7 L829.2 192.9 L833.4 193.1 L837.5 193.3 L841.6 193.6 L845.8 193.8 L849.9 194.1 L854.0 194.4 L858.1 194.7 L862.2 195.1 L866.3 195.5 L870.4 195.9 L874.5 196.3 L878.5 196.7 L882.6 197.1 L886.7 197.6 L890.8 198.1 L894.9 198.5 L899.0 199.0 L903.1 199.5 L907.2 199.9 L911.4 200.4 L915.5 200.9 L919.6 201.4 L923.8 201.9 L927.9 202.4 L932.1 203.0 L936.2 203.6 L940.4 204.2 L944.5 204.8 L948.6 205.5 L952.8 206.2 L956.9 206.9 L961.1 207.6 L965.2 208.4 L969.4 209.2 L973.5 210.0 L977.6 210.8 L981.8 211.7 L985.9 212.5 L990.0 213.4 L994.1 214.3 L998.2 215.2 L1002.3 216.1 L1006.4 217.0 L1010.5 218.0 L1014.5 218.9 L1018.6 219.9 L1022.7 220.9 L1026.8 221.8 L1030.9 222.8 L1035.0 223.8 L1039.2 224.8 L1043.4 225.8 L1047.7 226.9 L1052.0 227.9 L1056.3 229.0 L1060.6 230.0 L1064.8 231.1 L1068.9 232.1 L1072.9 233.1 L1076.8 234.1 L1080.4 235.0 L1085.3 236.2 L1090.2 237.5 L1095.0 238.8 L1099.5 239.9 L1103.7 241.1 L1107.4 242.0 L1110.6 242.9 L1113.0 243.5" fill="none" stroke="#e8606a" stroke-width="1" stroke-opacity="1" stroke-linejoin="round"/>
<path d="M1069.0 223.0 L1071.7 222.9 L1075.6 222.7 L1080.1 222.5 L1084.9 222.4 L1089.5 222.5 L1094.4 222.8 L1099.8 223.2 L1105.1 223.7 L1109.8 224.2 L1113.0 224.5" fill="none" stroke="#e860e8" stroke-width="1" stroke-opacity="1" stroke-linejoin="round"/>
<path d="M1.6 182.0 L3.5 182.8 L6.2 183.9 L9.4 185.3 L12.8 186.8 L16.5 188.4 L20.0 190.0 L23.0 191.5 L26.2 193.1 L29.5 194.9 L32.9 196.6 L36.3 198.4 L39.7 200.0 L43.0 201.5 L46.3 202.8 L49.6 204.1 L52.9 205.2 L56.1 206.3 L59.4 207.3 L62.7 208.3 L66.0 209.3 L69.3 210.3 L72.6 211.2 L75.9 212.1 L79.1 213.0 L82.4 213.8 L85.7 214.6 L89.0 215.3 L92.3 215.9 L95.6 216.5 L98.9 217.0 L102.1 217.4 L105.4 217.8 L108.7 218.2 L112.0 218.5 L115.3 218.8 L118.6 219.0 L121.8 219.2 L125.1 219.4 L128.4 219.6 L131.7 219.8 L135.0 220.0 L138.3 220.3 L141.7 220.6 L145.0 220.9 L148.4 221.2 L151.7 221.5 L155.1 221.9 L158.4 222.2 L161.7 222.5 L165.0 222.9 L168.3 223.3 L171.6 223.6 L174.8 223.9 L178.1 224.2 L181.4 224.5 L184.7 224.7 L188.0 225.0 L191.3 225.2 L194.6 225.4 L197.9 225.5 L201.2 225.5 L204.5 225.4 L207.8 225.2 L211.1 224.9 L214.4 224.5 L217.6 224.0 L220.9 223.5 L224.2 222.9 L227.5 222.2 L230.8 221.4 L234.1 220.5 L237.4 219.5 L240.7 218.5 L244.0 217.4 L247.3 216.3 L250.6 215.3 L253.9 214.3 L257.2 213.4 L260.5 212.5 L263.7 211.5 L267.0 210.6 L270.3 209.5 L273.6 208.4 L276.9 207.2 L280.2 205.9 L283.5 204.5 L286.8 203.1 L290.1 201.7 L293.4 200.3 L296.7 199.0 L300.0 197.7 L303.3 196.4 L306.6 195.2 L309.8 193.9 L313.1 192.6 L316.4 191.3 L319.7 190.0 L323.0 188.6 L326.3 187.1 L329.6 185.7 L333.0 184.2 L336.3 182.7 L339.5 181.2 L342.8 179.8 L346.1 178.4 L349.6 177.0 L353.1 175.5 L356.6 174.2 L359.8 172.9 L362.6 171.7 L365.0 170.6 L369.6 168.0 L372.4 165.9 L376.1 163.4 L379.8 160.9 L383.5 158.3 L387.2 155.9 L390.9 153.7 L394.6 151.6 L398.4 149.6 L402.1 147.8 L405.8 146.0 L409.5 144.4 L413.2 142.9 L416.9 141.7 L420.6 140.8 L424.3 140.3 L428.0 140.2 L431.7 140.3 L435.4 140.6 L439.1 140.8 L442.8 140.8 L446.6 140.7 L450.3 140.7 L454.0 140.8 L457.7 141.1 L461.4 141.4 L465.1 141.6 L468.8 141.7 L472.5 142.0 L476.2 142.3 L479.9 142.8 L483.6 143.5 L487.3 144.2 L491.0 145.0 L494.8 146.0 L498.5 147.0 L502.2 147.9 L505.9 148.8 L509.6 150.1 L513.3 151.4 L517.0 152.6 L520.7 153.9 L524.4 155.3 L528.1 156.8 L531.8 158.6 L535.5 160.5 L539.2 162.1 L542.9 163.5 L546.7 164.4 L550.4 165.1 L554.1 166.2 L557.8 167.3 L561.5 168.7 L565.2 170.0 L568.9 170.9 L572.6 171.9 L576.3 173.1 L580.0 174.6 L583.7 176.5 L587.4 178.6 L591.1 180.4 L594.9 182.2 L598.6 184.3 L602.3 186.3 L606.0 187.8 L609.7 189.3 L613.4 190.9 L617.1 192.7 L620.8 194.7 L624.5 196.8 L628.2 198.7 L631.9 200.6 L635.6 202.9 L639.3 205.1 L643.1 207.0 L646.8 208.7 L650.5 210.6 L654.2 212.5 L657.9 214.2 L661.6 215.9 L665.3 217.7 L669.0 219.7 L672.7 221.8 L676.4 224.0 L680.1 226.0 L683.8 227.9 L687.5 229.8 L691.2 231.9 L695.0 234.1 L698.7 236.6 L702.4 239.2 L706.1 242.0 L709.8 244.7 L713.5 247.4 L717.2 250.1 L720.9 252.6 L724.6 254.8 L728.3 256.9 L732.0 259.0 L735.7 261.1 L739.4 263.3 L743.2 265.6 L746.9 268.1 L750.6 270.7 L754.3 273.3 L758.0 275.9 L761.7 278.6 L765.4 281.3 L769.1 283.6 L772.8 285.8 L776.5 287.9 L780.2 289.9 L783.9 292.1 L787.6 294.0 L791.4 295.4 L795.1 296.5 L798.8 297.5 L802.5 298.2 L806.2 298.6 L809.9 298.9 L813.6 299.5 L817.3 300.2 L821.0 301.0 L824.7 301.7 L828.4 302.2 L832.1 302.6 L835.8 303.0 L839.5 303.3 L843.3 303.5 L847.0 303.8 L850.7 304.1 L854.4 304.5 L858.1 304.8 L861.8 305.1 L865.5 305.3 L869.2 305.6 L872.9 305.7 L876.6 305.8 L880.3 306.0 L884.0 306.3 L887.7 306.6 L891.5 306.9 L895.2 307.1 L898.9 307.1 L902.6 307.0 L906.3 306.9 L910.0 307.2 L913.7 307.7 L917.4 308.5 L921.1 309.3 L924.8 310.1 L928.5 310.8 L932.2 311.1 L935.9 311.4 L939.7 312.2 L943.4 313.0 L947.1 313.5 L950.8 313.9 L954.5 314.3 L958.2 314.8 L961.9 315.4 L965.6 316.0 L969.3 316.4 L973.0 317.1 L976.7 318.1 L980.4 319.2 L984.1 320.3 L987.9 321.3 L991.6 322.3 L995.3 323.3 L999.0 324.2 L1002.7 325.2 L1006.4 326.4 L1010.1 327.6 L1013.8 329.1 L1017.5 330.8 L1021.2 332.6 L1024.9 334.5 L1028.6 336.1 L1032.3 337.8 L1036.0 339.5 L1039.8 341.3 L1043.5 343.2 L1047.2 345.0 L1050.9 346.4 L1054.6 347.6 L1058.3 349.0 L1062.0 350.2 L1065.7 351.2 L1069.4 352.0 L1073.1 352.7 L1076.8 353.4 L1080.5 353.9 L1084.2 354.3 L1088.0 354.8 L1091.7 355.3 L1095.4 355.8 L1099.1 356.5 L1102.8 357.2 L1106.5 358.0 L1110.7 358.8 L1113.9 359.3" fill="none" stroke="#f0a840" stroke-width="1.1" stroke-opacity="1" stroke-linejoin="round"/>
<path d="M1.5 208.7 L3.7 210.1 L6.6 212.0 L10.2 214.2 L14.1 216.7 L18.1 219.5 L22.0 222.5 L24.9 224.9 L27.9 227.7 L31.0 230.6 L34.2 233.6 L37.4 236.7 L40.6 239.6 L43.8 242.4 L47.0 245.0 L50.1 247.4 L53.2 249.7 L56.4 252.0 L59.5 254.1 L62.6 256.1 L65.8 257.9 L68.9 259.6 L72.0 261.0 L75.2 262.2 L78.5 263.2 L81.9 264.0 L85.3 264.6 L88.5 265.1 L91.6 265.5 L94.5 265.8 L97.0 266.0 L100.7 266.1 L103.2 265.6 L105.8 264.8 L109.5 263.7 L112.1 263.0 L115.0 262.1 L118.3 261.2 L121.7 260.2 L125.1 259.1 L128.5 258.0 L131.6 257.0 L134.5 256.0 L138.4 254.5 L141.7 253.1 L144.8 251.7 L148.1 250.2 L152.0 248.7 L154.7 247.8 L157.5 246.9 L160.5 246.0 L163.6 245.1 L166.7 244.2 L170.0 243.0 L173.5 241.6 L177.0 240.0 L180.1 238.4 L183.4 236.4 L187.0 234.3 L190.7 232.0 L194.4 229.6 L198.0 227.3 L201.4 225.1 L204.5 223.1 L207.2 221.3 L209.5 220.0 L214.7 217.9 L216.7 217.4 L220.4 214.4 L224.1 210.7 L227.8 206.7 L231.5 202.8 L235.2 199.5 L238.9 196.5 L242.6 193.8 L246.4 190.9 L250.1 187.5 L253.8 184.0 L257.5 180.8 L261.2 177.8 L264.9 174.6 L268.6 171.4 L272.3 168.6 L276.0 165.9 L279.7 163.0 L283.4 160.1 L287.1 157.5 L290.8 154.9 L294.5 152.2 L298.3 149.3 L302.0 146.4 L305.7 143.8 L309.4 141.8 L313.1 139.9 L316.8 137.8 L320.5 135.7 L324.2 133.8 L327.9 131.9 L331.6 130.1 L335.3 128.4 L339.0 126.7 L342.7 125.1 L346.5 123.5 L350.2 121.9 L353.9 120.8 L357.6 119.9 L361.3 119.3 L365.0 118.7 L368.7 117.7 L372.4 116.8 L376.1 116.0 L379.8 115.3 L383.5 114.7 L387.2 114.2 L390.9 113.8 L394.6 113.3 L398.4 112.5 L402.1 111.7 L405.8 111.2 L409.5 110.7 L413.2 109.6 L416.9 108.6 L420.6 108.4 L424.3 108.8 L428.0 109.9 L431.7 111.7 L435.4 114.5 L439.1 117.3 L442.8 119.4 L446.6 121.2 L450.3 123.2 L454.0 125.1 L457.7 126.4 L461.4 127.7 L465.1 129.0 L468.8 130.4 L472.5 132.2 L476.2 134.2 L479.9 136.1 L483.6 138.4 L487.3 141.2 L491.0 144.3 L494.8 147.2 L498.5 150.2 L502.2 153.6 L505.9 157.1 L509.6 160.0 L513.3 162.9 L517.0 166.0 L520.7 169.4 L524.4 173.3 L528.1 177.2 L531.8 181.0 L535.5 184.6 L539.2 187.9 L542.9 191.0 L546.7 193.9 L550.4 196.8 L554.1 200.0 L557.8 203.6 L561.5 207.5 L565.2 211.6 L568.9 215.1 L572.6 218.4 L576.3 221.3 L580.0 224.1 L583.7 227.3 L587.4 230.7 L591.1 234.3 L594.9 237.9 L598.6 241.5 L602.3 245.1 L606.0 248.6 L609.7 252.2 L613.4 255.9 L617.1 259.5 L620.8 262.7 L624.5 265.6 L628.2 268.6 L631.9 271.5 L635.6 274.5 L639.3 277.2 L643.1 278.9 L646.8 280.0 L650.5 280.3 L654.2 280.3 L657.9 280.2 L661.6 280.1 L665.3 280.5 L669.0 281.0 L672.7 281.7 L676.4 282.4 L680.1 283.3 L683.8 284.1 L687.5 284.9 L691.2 285.9 L695.0 287.4 L698.7 289.1 L702.4 290.8 L706.1 292.5 L709.8 294.2 L713.5 295.8 L717.2 296.9 L720.9 297.9 L724.6 299.1 L728.3 300.1 L732.0 300.8 L735.7 301.5 L739.4 302.2 L743.2 303.0 L746.9 304.1 L750.6 305.1 L754.3 305.8 L758.0 306.5 L761.7 308.0 L765.4 309.6 L769.1 311.3 L772.8 312.9 L776.5 314.1 L780.2 315.0 L783.9 315.2 L787.6 315.3 L791.4 315.9 L795.1 316.5 L798.8 317.2 L802.5 317.7 L806.2 317.9 L809.9 317.9 L813.6 318.0 L817.3 317.9 L821.0 317.7 L824.7 317.4 L828.4 317.1 L832.1 316.6 L835.8 315.7 L839.5 314.7 L843.3 313.6 L847.0 312.6 L850.7 311.9 L854.4 311.4 L858.1 311.1 L861.8 311.0 L865.5 311.1 L869.2 311.5 L872.9 312.0 L876.6 312.6 L880.3 313.1 L884.0 313.6 L887.7 314.2 L891.5 314.7 L895.2 315.3 L898.9 315.8 L902.6 316.0 L906.3 316.2 L910.0 316.8 L913.7 317.4 L917.4 317.8 L921.1 318.1 L924.8 318.2 L928.5 318.3 L932.2 318.2 L935.9 318.2 L939.7 318.7 L943.4 319.1 L947.1 319.0 L950.8 319.0 L954.5 319.6 L958.2 320.4 L961.9 321.2 L965.6 321.8 L969.3 322.1 L973.0 322.4 L976.7 323.3 L980.4 324.5 L984.1 325.4 L987.9 326.2 L991.6 327.1 L995.3 328.1 L999.0 329.2 L1002.7 330.4 L1006.4 331.7 L1010.1 333.2 L1013.8 335.1 L1017.5 337.1 L1021.2 339.0 L1024.9 340.8 L1028.6 342.8 L1032.3 344.9 L1036.0 347.1 L1039.8 349.4 L1043.5 352.0 L1047.2 354.6 L1050.9 356.8 L1054.6 359.1 L1058.3 361.6 L1062.0 364.2 L1065.7 366.8 L1069.4 369.3 L1073.1 371.8 L1076.8 374.0 L1080.5 376.0 L1084.2 377.8 L1088.0 379.3 L1091.7 380.8 L1095.4 382.7 L1099.1 384.6 L1102.8 386.2 L1106.5 387.7 L1110.7 389.2 L1113.9 390.3" fill="none" stroke="#cc2c54" stroke-width="0.8" stroke-opacity="0.95" stroke-linejoin="round"/>
<path d="M1.5 246.2 L3.7 248.3 L6.6 251.3 L10.2 254.8 L14.1 258.5 L18.1 262.0 L22.0 265.0 L24.9 266.9 L27.9 268.7 L31.0 270.5 L34.2 272.1 L37.4 273.6 L40.6 275.1 L43.8 276.3 L47.0 277.5 L50.1 278.5 L53.2 279.5 L56.4 280.3 L59.5 280.9 L62.6 281.5 L65.8 282.0 L68.9 282.3 L72.0 282.5 L75.2 282.6 L78.5 282.5 L81.9 282.2 L85.3 281.9 L88.5 281.5 L91.6 281.0 L94.5 280.5 L97.0 280.0 L101.0 279.0 L104.0 278.0 L106.7 276.7 L109.5 275.0 L112.6 272.8 L115.8 270.2 L118.9 267.5 L122.0 265.0 L125.2 262.7 L128.5 260.5 L131.7 258.3 L134.5 256.2 L138.8 252.3 L142.5 248.4 L146.3 244.2 L150.0 239.6 L153.7 234.6 L157.4 229.3 L161.1 223.7 L164.8 218.3 L168.5 213.4 L172.2 208.9 L175.9 205.2 L179.6 201.8 L183.3 198.2 L187.0 195.0 L190.7 192.9 L194.4 191.2 L198.2 189.3 L201.9 187.4 L205.6 185.6 L209.3 183.3 L213.0 179.7 L216.7 175.9 L220.4 172.8 L224.1 169.9 L227.8 166.9 L231.5 164.4 L235.2 163.0 L238.9 161.9 L242.6 160.4 L246.4 158.7 L250.1 156.6 L253.8 154.4 L257.5 152.9 L261.2 151.2 L264.9 148.7 L268.6 146.0 L272.3 144.2 L276.0 142.2 L279.7 139.2 L283.4 136.4 L287.1 135.1 L290.8 134.2 L294.5 132.5 L298.3 130.6 L302.0 128.3 L305.7 126.2 L309.4 125.1 L313.1 124.4 L316.8 123.5 L320.5 122.3 L324.2 120.1 L327.9 117.6 L331.6 115.4 L335.3 113.0 L339.0 110.4 L342.7 107.6 L346.5 104.6 L350.2 102.1 L353.9 100.9 L357.6 100.4 L361.3 100.4 L365.0 100.4 L368.7 99.6 L372.4 98.7 L376.1 98.4 L379.8 98.0 L383.5 96.6 L387.2 95.0 L390.9 93.5 L394.6 92.5 L398.4 92.8 L402.1 93.5 L405.8 93.8 L409.5 94.4 L413.2 95.4 L416.9 97.0 L420.6 99.1 L424.3 101.9 L428.0 106.1 L431.7 110.7 L435.4 115.1 L439.1 119.5 L442.8 123.6 L446.6 127.7 L450.3 132.1 L454.0 136.3 L457.7 140.0 L461.4 143.6 L465.1 147.2 L468.8 150.8 L472.5 154.3 L476.2 157.8 L479.9 161.9 L483.6 166.2 L487.3 170.4 L491.0 174.8 L494.8 179.7 L498.5 184.5 L502.2 188.4 L505.9 192.2 L509.6 196.2 L513.3 200.5 L517.0 204.9 L520.7 209.5 L524.4 214.2 L528.1 219.1 L531.8 224.5 L535.5 229.9 L539.2 234.6 L542.9 238.8 L546.7 242.1 L550.4 245.2 L554.1 248.6 L557.8 252.4 L561.5 257.4 L565.2 262.0 L568.9 264.6 L572.6 266.4 L576.3 267.9 L580.0 269.0 L583.7 269.7 L587.4 270.5 L591.1 271.9 L594.9 273.7 L598.6 275.9 L602.3 278.1 L606.0 279.9 L609.7 281.7 L613.4 283.9 L617.1 286.1 L620.8 288.4 L624.5 290.6 L628.2 292.5 L631.9 294.1 L635.6 295.3 L639.3 296.2 L643.1 296.6 L646.8 296.6 L650.5 296.1 L654.2 295.5 L657.9 295.4 L661.6 295.4 L665.3 295.3 L669.0 295.2 L672.7 294.7 L676.4 294.1 L680.1 293.4 L683.8 292.9 L687.5 292.7 L691.2 293.1 L695.0 294.5 L698.7 296.3 L702.4 298.0 L706.1 299.6 L709.8 300.4 L713.5 301.2 L717.2 302.5 L720.9 303.9 L724.6 305.2 L728.3 306.2 L732.0 306.5 L735.7 306.6 L739.4 306.8 L743.2 307.2 L746.9 308.0 L750.6 309.1 L754.3 310.2 L758.0 311.4 L761.7 312.7 L765.4 314.0 L769.1 315.1 L772.8 316.1 L776.5 316.8 L780.2 317.6 L783.9 318.4 L787.6 319.2 L791.4 320.1 L795.1 321.2 L798.8 323.1 L802.5 325.0 L806.2 326.2 L809.9 327.1 L813.6 328.1 L817.3 329.1 L821.0 329.9 L824.7 330.5 L828.4 330.6 L832.1 330.4 L835.8 330.1 L839.5 329.3 L843.3 327.8 L847.0 325.9 L850.7 324.1 L854.4 322.3 L858.1 320.6 L861.8 319.0 L865.5 318.0 L869.2 317.0 L872.9 315.5 L876.6 314.3 L880.3 313.8 L884.0 313.6 L887.7 313.3 L891.5 312.8 L895.2 311.6 L898.9 310.2 L902.6 308.8 L906.3 307.3 L910.0 306.0 L913.7 304.9 L917.4 304.3 L921.1 304.1 L924.8 304.2 L928.5 304.6 L932.2 304.9 L935.9 305.4 L939.7 306.6 L943.4 307.8 L947.1 307.9 L950.8 308.1 L954.5 309.0 L958.2 310.2 L961.9 311.5 L965.6 313.0 L969.3 314.5 L973.0 316.5 L976.7 319.6 L980.4 323.2 L984.1 327.2 L987.9 331.3 L991.6 335.4 L995.3 339.2 L999.0 342.7 L1002.7 346.0 L1006.4 349.3 L1010.1 352.6 L1013.8 356.1 L1017.5 359.7 L1021.2 363.5 L1024.9 367.3 L1028.6 370.7 L1032.3 374.1 L1036.0 377.5 L1039.8 381.1 L1043.5 385.0 L1047.2 388.7 L1050.9 391.9 L1054.6 394.8 L1058.3 397.3 L1062.0 399.4 L1065.7 401.2 L1069.4 402.8 L1073.1 404.5 L1076.8 406.0 L1080.5 407.4 L1084.2 408.5 L1088.0 409.0 L1091.7 409.5 L1095.4 411.0 L1099.1 412.7 L1102.8 413.8 L1106.5 414.6 L1110.7 415.2 L1113.9 415.5" fill="none" stroke="#c03078" stroke-width="0.8" stroke-opacity="0.95" stroke-linejoin="round"/>
<path d="M1.5 272.5 L4.7 279.1 L9.5 287.5 L12.3 291.3 L15.5 295.2 L18.8 298.9 L22.0 302.5 L25.2 306.0 L28.6 309.5 L31.7 312.6 L34.5 315.0 L38.2 317.9 L42.0 318.7 L44.7 318.3 L47.9 317.3 L51.2 315.7 L54.5 313.7 L58.0 310.8 L61.8 307.2 L65.3 303.6 L68.4 300.4 L72.5 296.3 L75.8 292.3 L79.5 286.3 L83.2 279.6 L86.9 272.5 L90.6 265.7 L94.3 260.4 L98.1 255.3 L101.8 249.3 L105.5 243.1 L109.2 236.8 L112.9 230.9 L116.6 226.3 L120.3 222.2 L124.0 217.5 L127.7 213.2 L131.4 210.5 L135.1 207.6 L138.8 202.3 L142.5 196.5 L146.2 191.5 L150.0 186.9 L153.7 182.8 L157.4 178.9 L161.1 175.0 L164.8 170.9 L168.5 166.3 L172.2 162.5 L175.9 161.1 L179.6 160.6 L183.3 159.7 L187.0 159.1 L190.7 159.5 L194.4 160.2 L198.2 161.2 L201.9 161.7 L205.6 160.7 L209.3 159.0 L213.0 157.2 L216.7 155.4 L220.4 154.1 L224.1 152.9 L227.8 151.0 L231.5 149.8 L235.2 151.0 L238.9 152.8 L242.6 154.5 L246.4 155.0 L250.1 152.1 L253.8 148.3 L257.5 146.1 L261.2 143.3 L264.9 137.9 L268.6 131.9 L272.3 127.1 L276.0 122.7 L279.7 117.7 L283.4 113.8 L287.1 113.1 L290.8 113.0 L294.5 110.9 L298.3 108.2 L302.0 105.5 L305.7 102.6 L309.4 99.3 L313.1 96.0 L316.8 92.5 L320.5 89.6 L324.2 88.1 L327.9 86.9 L331.6 84.7 L335.3 82.8 L339.0 82.9 L342.7 83.3 L346.5 82.1 L350.2 81.4 L353.9 84.1 L357.6 87.0 L361.3 87.7 L365.0 87.7 L368.7 88.2 L372.4 89.1 L376.1 91.3 L379.8 93.4 L383.5 93.9 L387.2 94.0 L390.9 94.5 L394.6 95.5 L398.4 97.5 L402.1 100.0 L405.8 103.0 L409.5 105.9 L413.2 107.9 L416.9 110.6 L420.6 116.0 L424.3 122.4 L428.0 128.0 L431.7 134.4 L435.4 142.6 L439.1 151.2 L442.8 159.0 L446.6 166.3 L450.3 172.8 L454.0 179.1 L457.7 186.1 L461.4 193.1 L465.1 200.0 L468.8 206.2 L472.5 211.1 L476.2 215.7 L479.9 220.8 L483.6 226.4 L487.3 232.9 L491.0 239.0 L494.8 243.4 L498.5 246.7 L502.2 248.8 L505.9 249.9 L509.6 249.8 L513.3 249.7 L517.0 250.8 L520.7 252.7 L524.4 255.6 L528.1 259.1 L531.8 262.9 L535.5 266.6 L539.2 269.3 L542.9 271.4 L546.7 273.2 L550.4 274.7 L554.1 276.3 L557.8 278.3 L561.5 281.8 L565.2 285.0 L568.9 285.8 L572.6 286.1 L576.3 286.9 L580.0 288.0 L583.7 289.5 L587.4 291.3 L591.1 293.0 L594.9 294.7 L598.6 296.1 L602.3 297.1 L606.0 296.9 L609.7 296.9 L613.4 298.5 L617.1 300.9 L620.8 303.7 L624.5 306.5 L628.2 308.6 L631.9 309.8 L635.6 308.9 L639.3 307.5 L643.1 307.4 L646.8 307.1 L650.5 305.3 L654.2 303.1 L657.9 301.3 L661.6 299.5 L665.3 297.7 L669.0 295.7 L672.7 293.3 L676.4 291.2 L680.1 290.0 L683.8 288.9 L687.5 287.0 L691.2 285.4 L695.0 285.3 L698.7 286.1 L702.4 287.5 L706.1 289.5 L709.8 292.0 L713.5 294.8 L717.2 297.5 L720.9 300.6 L724.6 305.1 L728.3 309.3 L732.0 311.7 L735.7 313.6 L739.4 315.9 L743.2 318.7 L746.9 322.8 L750.6 327.1 L754.3 330.4 L758.0 333.8 L761.7 338.4 L765.4 342.6 L769.1 344.9 L772.8 346.1 L776.5 346.2 L780.2 345.6 L783.9 344.7 L787.6 343.7 L791.4 342.7 L795.1 341.9 L798.8 341.2 L802.5 340.7 L806.2 340.6 L809.9 340.6 L813.6 340.4 L817.3 339.5 L821.0 337.1 L824.7 334.0 L828.4 330.8 L832.1 327.0 L835.8 321.7 L839.5 316.0 L843.3 310.7 L847.0 305.8 L850.7 302.1 L854.4 299.1 L858.1 296.5 L861.8 294.4 L865.5 293.2 L869.2 292.1 L872.9 289.9 L876.6 287.9 L880.3 287.0 L884.0 286.7 L887.7 286.3 L891.5 286.0 L895.2 286.1 L898.9 286.4 L902.6 286.7 L906.3 287.6 L910.0 290.2 L913.7 293.7 L917.4 297.9 L921.1 302.3 L924.8 306.4 L928.5 310.1 L932.2 313.3 L935.9 316.4 L939.7 320.0 L943.4 323.4 L947.1 326.0 L950.8 328.3 L954.5 331.0 L958.2 333.8 L961.9 336.8 L965.6 340.0 L969.3 343.0 L973.0 346.7 L976.7 352.5 L980.4 358.8 L984.1 364.2 L987.9 369.0 L991.6 372.8 L995.3 376.1 L999.0 379.0 L1002.7 381.9 L1006.4 385.3 L1010.1 388.9 L1013.8 392.2 L1017.5 395.9 L1021.2 401.0 L1024.9 406.2 L1028.6 410.4 L1032.3 414.3 L1036.0 418.2 L1039.8 422.2 L1043.5 427.0 L1047.2 430.7 L1050.9 431.3 L1054.6 430.7 L1058.3 430.3 L1062.0 429.9 L1065.7 429.6 L1069.4 429.5 L1073.1 429.9 L1076.8 430.1 L1080.5 429.5 L1084.2 428.2 L1088.0 425.8 L1091.7 423.1 L1095.4 421.1 L1099.1 419.2 L1102.8 417.2 L1106.5 414.9 L1110.7 411.5 L1113.9 408.8" fill="none" stroke="#9cee9c" stroke-width="0.8" stroke-opacity="1" stroke-linejoin="round"/>
<line x1="1.5" y1="309.0" x2="1.5" y2="327.0" stroke="#666" stroke-width="1"/>
<rect x="-0.5" y="309.3" width="4" height="17.7" fill="#cc0505" stroke="#6a0000" stroke-width="0.9"/>
<line x1="9.5" y1="320.0" x2="9.5" y2="354.0" stroke="#666" stroke-width="1"/>
<rect x="7.5" y="325.7" width="4" height="28.0" fill="#cc0505" stroke="#6a0000" stroke-width="0.9"/>
<line x1="16.5" y1="327.5" x2="16.5" y2="358.0" stroke="#666" stroke-width="1"/>
<rect x="14.5" y="346.2" width="4" height="6.3" fill="#22ee38" stroke="#0c5c12" stroke-width="0.9"/>
<line x1="23.5" y1="317.0" x2="23.5" y2="353.7" stroke="#666" stroke-width="1"/>
<rect x="21.5" y="320.0" width="4" height="24.2" fill="#22ee38" stroke="#0c5c12" stroke-width="0.9"/>
<line x1="31.5" y1="313.0" x2="31.5" y2="333.7" stroke="#666" stroke-width="1"/>
<rect x="29.5" y="319.2" width="4" height="7.8" fill="#cc0505" stroke="#6a0000" stroke-width="0.9"/>
<line x1="38.5" y1="295.0" x2="38.5" y2="339.5" stroke="#666" stroke-width="1"/>
<rect x="36.5" y="300.0" width="4" height="28.0" fill="#22ee38" stroke="#0c5c12" stroke-width="0.9"/>
<line x1="46.5" y1="263.0" x2="46.5" y2="308.0" stroke="#666" stroke-width="1"/>
<rect x="44.5" y="265.0" width="4" height="33.0" fill="#22ee38" stroke="#0c5c12" stroke-width="0.9"/>
<line x1="53.5" y1="243.0" x2="53.5" y2="272.5" stroke="#666" stroke-width="1"/>
<rect x="51.5" y="265.0" width="4" height="3.2" fill="#cc0505" stroke="#6a0000" stroke-width="0.9"/>
<line x1="60.5" y1="235.5" x2="60.5" y2="272.5" stroke="#666" stroke-width="1"/>
<rect x="58.5" y="244.0" width="4" height="25.5" fill="#22ee38" stroke="#0c5c12" stroke-width="0.9"/>
<line x1="68.5" y1="240.0" x2="68.5" y2="269.5" stroke="#666" stroke-width="1"/>
<rect x="66.5" y="243.7" width="4" height="9.3" fill="#cc0505" stroke="#6a0000" stroke-width="0.9"/>
<line x1="75.5" y1="240.0" x2="75.5" y2="266.0" stroke="#666" stroke-width="1"/>
<rect x="73.5" y="246.0" width="4" height="10.2" fill="#22ee38" stroke="#0c5c12" stroke-width="0.9"/>
<line x1="83.5" y1="220.0" x2="83.5" y2="262.5" stroke="#666" stroke-width="1"/>
<rect x="81.5" y="226.2" width="4" height="18.8" fill="#22ee38" stroke="#0c5c12" stroke-width="0.9"/>
<line x1="90.5" y1="203.0" x2="90.5" y2="224.0" stroke="#666" stroke-width="1"/>
<rect x="88.5" y="208.0" width="4" height="16.0" fill="#22ee38" stroke="#0c5c12" stroke-width="0.9"/>
<line x1="98.5" y1="199.0" x2="98.5" y2="220.5" stroke="#666" stroke-width="1"/>
<rect x="96.5" y="207.0" width="4" height="8.5" fill="#cc0505" stroke="#6a0000" stroke-width="0.9"/>
<line x1="105.5" y1="199.0" x2="105.5" y2="223.7" stroke="#666" stroke-width="1"/>
<rect x="103.5" y="205.0" width="4" height="9.5" fill="#22ee38" stroke="#0c5c12" stroke-width="0.9"/>
<line x1="112.5" y1="169.0" x2="112.5" y2="227.5" stroke="#666" stroke-width="1"/>
<rect x="110.5" y="178.0" width="4" height="27.0" fill="#22ee38" stroke="#0c5c12" stroke-width="0.9"/>
<line x1="120.5" y1="152.5" x2="120.5" y2="183.0" stroke="#666" stroke-width="1"/>
<rect x="118.5" y="175.7" width="4" height="2.3" fill="#cc0505" stroke="#6a0000" stroke-width="0.9"/>
<line x1="127.5" y1="172.0" x2="127.5" y2="196.0" stroke="#666" stroke-width="1"/>
<rect x="125.5" y="175.7" width="4" height="2.3" fill="#cc0505" stroke="#6a0000" stroke-width="0.9"/>
<line x1="135.5" y1="157.5" x2="135.5" y2="199.0" stroke="#666" stroke-width="1"/>
<rect x="133.5" y="177.0" width="4" height="11.0" fill="#cc0505" stroke="#6a0000" stroke-width="0.9"/>
<line x1="142.5" y1="141.0" x2="142.5" y2="188.0" stroke="#666" stroke-width="1"/>
<rect x="140.5" y="142.0" width="4" height="46.0" fill="#22ee38" stroke="#0c5c12" stroke-width="0.9"/>
<line x1="149.5" y1="131.0" x2="149.5" y2="162.5" stroke="#666" stroke-width="1"/>
<rect x="147.5" y="145.5" width="4" height="4.5" fill="#cc0505" stroke="#6a0000" stroke-width="0.9"/>
<line x1="157.5" y1="141.0" x2="157.5" y2="162.5" stroke="#666" stroke-width="1"/>
<rect x="155.5" y="147.0" width="4" height="2.5" fill="#22ee38" stroke="#0c5c12" stroke-width="0.9"/>
<line x1="164.5" y1="121.0" x2="164.5" y2="165.0" stroke="#666" stroke-width="1"/>
<rect x="162.5" y="128.0" width="4" height="18.0" fill="#22ee38" stroke="#0c5c12" stroke-width="0.9"/>
<line x1="172.5" y1="113.0" x2="172.5" y2="139.0" stroke="#666" stroke-width="1"/>
<rect x="170.5" y="127.0" width="4" height="4.0" fill="#cc0505" stroke="#6a0000" stroke-width="0.9"/>
<line x1="179.5" y1="126.0" x2="179.5" y2="186.0" stroke="#666" stroke-width="1"/>
<rect x="177.5" y="132.0" width="4" height="54.0" fill="#cc0505" stroke="#6a0000" stroke-width="0.9"/>
<line x1="187.5" y1="154.0" x2="187.5" y2="188.0" stroke="#666" stroke-width="1"/>
<rect x="185.5" y="163.0" width="4" height="16.5" fill="#22ee38" stroke="#0c5c12" stroke-width="0.9"/>
<line x1="194.5" y1="157.5" x2="194.5" y2="196.0" stroke="#666" stroke-width="1"/>
<rect x="192.5" y="161.7" width="4" height="27.3" fill="#cc0505" stroke="#6a0000" stroke-width="0.9"/>
<line x1="201.5" y1="181.0" x2="201.5" y2="204.0" stroke="#666" stroke-width="1"/>
<rect x="199.5" y="189.0" width="4" height="4.0" fill="#cc0505" stroke="#6a0000" stroke-width="0.9"/>
<line x1="209.5" y1="155.5" x2="209.5" y2="199.0" stroke="#666" stroke-width="1"/>
<rect x="207.5" y="161.0" width="4" height="32.0" fill="#22ee38" stroke="#0c5c12" stroke-width="0.9"/>
<line x1="216.5" y1="100.0" x2="216.5" y2="166.0" stroke="#666" stroke-width="1"/>
<rect x="214.5" y="105.7" width="4" height="54.3" fill="#22ee38" stroke="#0c5c12" stroke-width="0.9"/>
<line x1="224.5" y1="98.0" x2="224.5" y2="125.5" stroke="#666" stroke-width="1"/>
<rect x="222.5" y="107.5" width="4" height="18.0" fill="#cc0505" stroke="#6a0000" stroke-width="0.9"/>
<line x1="231.5" y1="95.5" x2="231.5" y2="128.7" stroke="#666" stroke-width="1"/>
<rect x="229.5" y="115.7" width="4" height="9.8" fill="#22ee38" stroke="#0c5c12" stroke-width="0.9"/>
<line x1="238.5" y1="112.0" x2="238.5" y2="158.0" stroke="#666" stroke-width="1"/>
<rect x="236.5" y="114.5" width="4" height="43.5" fill="#cc0505" stroke="#6a0000" stroke-width="0.9"/>
<line x1="246.5" y1="137.5" x2="246.5" y2="167.5" stroke="#666" stroke-width="1"/>
<rect x="244.5" y="153.0" width="4" height="3.0" fill="#22ee38" stroke="#0c5c12" stroke-width="0.9"/>
<line x1="253.5" y1="113.0" x2="253.5" y2="156.0" stroke="#666" stroke-width="1"/>
<rect x="251.5" y="119.0" width="4" height="33.5" fill="#22ee38" stroke="#0c5c12" stroke-width="0.9"/>
<line x1="261.5" y1="103.0" x2="261.5" y2="126.0" stroke="#666" stroke-width="1"/>
<rect x="259.5" y="113.0" width="4" height="6.5" fill="#22ee38" stroke="#0c5c12" stroke-width="0.9"/>
<line x1="268.5" y1="67.0" x2="268.5" y2="112.0" stroke="#666" stroke-width="1"/>
<rect x="266.5" y="75.0" width="4" height="37.0" fill="#22ee38" stroke="#0c5c12" stroke-width="0.9"/>
<line x1="276.5" y1="61.0" x2="276.5" y2="107.0" stroke="#666" stroke-width="1"/>
<rect x="274.5" y="73.7" width="4" height="27.3" fill="#cc0505" stroke="#6a0000" stroke-width="0.9"/>
<line x1="283.5" y1="69.0" x2="283.5" y2="102.0" stroke="#666" stroke-width="1"/>
<rect x="281.5" y="71.7" width="4" height="30.3" fill="#22ee38" stroke="#0c5c12" stroke-width="0.9"/>
<line x1="290.5" y1="63.0" x2="290.5" y2="107.5" stroke="#666" stroke-width="1"/>
<rect x="288.5" y="69.5" width="4" height="28.5" fill="#cc0505" stroke="#6a0000" stroke-width="0.9"/>
<line x1="298.5" y1="68.7" x2="298.5" y2="100.5" stroke="#666" stroke-width="1"/>
<rect x="296.5" y="78.0" width="4" height="20.7" fill="#22ee38" stroke="#0c5c12" stroke-width="0.9"/>
<line x1="305.5" y1="48.7" x2="305.5" y2="79.5" stroke="#666" stroke-width="1"/>
<rect x="303.5" y="59.0" width="4" height="18.5" fill="#22ee38" stroke="#0c5c12" stroke-width="0.9"/>
<line x1="313.5" y1="51.0" x2="313.5" y2="95.0" stroke="#666" stroke-width="1"/>
<rect x="311.5" y="57.5" width="4" height="34.5" fill="#cc0505" stroke="#6a0000" stroke-width="0.9"/>
<line x1="320.5" y1="77.0" x2="320.5" y2="99.5" stroke="#666" stroke-width="1"/>
<rect x="318.5" y="89.0" width="4" height="1.7" fill="#22ee38" stroke="#0c5c12" stroke-width="0.9"/>
<line x1="327.5" y1="83.0" x2="327.5" y2="122.5" stroke="#666" stroke-width="1"/>
<rect x="325.5" y="89.0" width="4" height="3.5" fill="#cc0505" stroke="#6a0000" stroke-width="0.9"/>
<line x1="335.5" y1="68.0" x2="335.5" y2="93.7" stroke="#666" stroke-width="1"/>
<rect x="333.5" y="71.7" width="4" height="18.8" fill="#22ee38" stroke="#0c5c12" stroke-width="0.9"/>
<line x1="342.5" y1="55.7" x2="342.5" y2="80.5" stroke="#666" stroke-width="1"/>
<rect x="340.5" y="70.7" width="4" height="9.8" fill="#cc0505" stroke="#6a0000" stroke-width="0.9"/>
<line x1="350.5" y1="71.0" x2="350.5" y2="105.0" stroke="#666" stroke-width="1"/>
<rect x="348.5" y="77.5" width="4" height="4.2" fill="#cc0505" stroke="#6a0000" stroke-width="0.9"/>
<line x1="357.5" y1="77.0" x2="357.5" y2="130.0" stroke="#666" stroke-width="1"/>
<rect x="355.5" y="81.0" width="4" height="47.0" fill="#cc0505" stroke="#6a0000" stroke-width="0.9"/>
<line x1="364.5" y1="92.5" x2="364.5" y2="138.7" stroke="#666" stroke-width="1"/>
<rect x="362.5" y="105.0" width="4" height="20.5" fill="#22ee38" stroke="#0c5c12" stroke-width="0.9"/>
<line x1="372.5" y1="85.0" x2="372.5" y2="116.0" stroke="#666" stroke-width="1"/>
<rect x="370.5" y="92.0" width="4" height="12.5" fill="#22ee38" stroke="#0c5c12" stroke-width="0.9"/>
<line x1="379.5" y1="89.5" x2="379.5" y2="105.0" stroke="#666" stroke-width="1"/>
<rect x="377.5" y="92.0" width="4" height="10.0" fill="#cc0505" stroke="#6a0000" stroke-width="0.9"/>
<line x1="387.5" y1="75.5" x2="387.5" y2="101.0" stroke="#666" stroke-width="1"/>
<rect x="385.5" y="97.5" width="4" height="3.5" fill="#22ee38" stroke="#0c5c12" stroke-width="0.9"/>
<line x1="394.5" y1="88.7" x2="394.5" y2="117.5" stroke="#666" stroke-width="1"/>
<rect x="392.5" y="97.0" width="4" height="6.7" fill="#cc0505" stroke="#6a0000" stroke-width="0.9"/>
<line x1="402.5" y1="87.5" x2="402.5" y2="144.0" stroke="#666" stroke-width="1"/>
<rect x="400.5" y="103.0" width="4" height="35.0" fill="#cc0505" stroke="#6a0000" stroke-width="0.9"/>
<line x1="409.5" y1="123.7" x2="409.5" y2="144.0" stroke="#666" stroke-width="1"/>
<rect x="407.5" y="131.0" width="4" height="5.7" fill="#22ee38" stroke="#0c5c12" stroke-width="0.9"/>
<line x1="416.5" y1="113.7" x2="416.5" y2="140.5" stroke="#666" stroke-width="1"/>
<rect x="414.5" y="127.5" width="4" height="3.0" fill="#22ee38" stroke="#0c5c12" stroke-width="0.9"/>
<line x1="424.5" y1="122.5" x2="424.5" y2="199.0" stroke="#666" stroke-width="1"/>
<rect x="422.5" y="125.7" width="4" height="73.3" fill="#cc0505" stroke="#6a0000" stroke-width="0.9"/>
<line x1="431.5" y1="192.0" x2="431.5" y2="255.5" stroke="#666" stroke-width="1"/>
<rect x="429.5" y="197.5" width="4" height="50.5" fill="#cc0505" stroke="#6a0000" stroke-width="0.9"/>
<line x1="439.5" y1="235.7" x2="439.5" y2="280.5" stroke="#666" stroke-width="1"/>
<rect x="437.5" y="247.0" width="4" height="26.7" fill="#cc0505" stroke="#6a0000" stroke-width="0.9"/>
<line x1="446.5" y1="239.0" x2="446.5" y2="279.5" stroke="#666" stroke-width="1"/>
<rect x="444.5" y="243.0" width="4" height="26.0" fill="#22ee38" stroke="#0c5c12" stroke-width="0.9"/>
<line x1="453.5" y1="222.0" x2="453.5" y2="261.0" stroke="#666" stroke-width="1"/>
<rect x="451.5" y="230.0" width="4" height="11.7" fill="#22ee38" stroke="#0c5c12" stroke-width="0.9"/>
<line x1="461.5" y1="211.0" x2="461.5" y2="244.0" stroke="#666" stroke-width="1"/>
<rect x="459.5" y="230.0" width="4" height="7.5" fill="#cc0505" stroke="#6a0000" stroke-width="0.9"/>
<line x1="468.5" y1="219.5" x2="468.5" y2="240.5" stroke="#666" stroke-width="1"/>
<rect x="466.5" y="234.5" width="4" height="1.6" fill="#22ee38" stroke="#0c5c12" stroke-width="0.9"/>
<line x1="476.5" y1="209.0" x2="476.5" y2="237.0" stroke="#666" stroke-width="1"/>
<rect x="474.5" y="232.5" width="4" height="1.6" fill="#22ee38" stroke="#0c5c12" stroke-width="0.9"/>
<line x1="483.5" y1="225.7" x2="483.5" y2="250.0" stroke="#666" stroke-width="1"/>
<rect x="481.5" y="231.7" width="4" height="6.3" fill="#cc0505" stroke="#6a0000" stroke-width="0.9"/>
<line x1="491.5" y1="233.0" x2="491.5" y2="262.5" stroke="#666" stroke-width="1"/>
<rect x="489.5" y="237.0" width="4" height="17.0" fill="#cc0505" stroke="#6a0000" stroke-width="0.9"/>
<line x1="498.5" y1="246.0" x2="498.5" y2="281.0" stroke="#666" stroke-width="1"/>
<rect x="496.5" y="253.0" width="4" height="22.7" fill="#cc0505" stroke="#6a0000" stroke-width="0.9"/>
<line x1="505.5" y1="259.0" x2="505.5" y2="286.0" stroke="#666" stroke-width="1"/>
<rect x="503.5" y="273.7" width="4" height="6.8" fill="#cc0505" stroke="#6a0000" stroke-width="0.9"/>
<line x1="513.5" y1="265.0" x2="513.5" y2="287.0" stroke="#666" stroke-width="1"/>
<rect x="511.5" y="271.0" width="4" height="9.0" fill="#22ee38" stroke="#0c5c12" stroke-width="0.9"/>
<line x1="520.5" y1="261.0" x2="520.5" y2="277.5" stroke="#666" stroke-width="1"/>
<rect x="518.5" y="271.0" width="4" height="2.5" fill="#cc0505" stroke="#6a0000" stroke-width="0.9"/>
<line x1="528.5" y1="253.7" x2="528.5" y2="302.5" stroke="#666" stroke-width="1"/>
<rect x="526.5" y="270.7" width="4" height="23.3" fill="#cc0505" stroke="#6a0000" stroke-width="0.9"/>
<line x1="535.5" y1="285.0" x2="535.5" y2="315.5" stroke="#666" stroke-width="1"/>
<rect x="533.5" y="293.0" width="4" height="19.0" fill="#cc0505" stroke="#6a0000" stroke-width="0.9"/>
<line x1="542.5" y1="267.5" x2="542.5" y2="314.5" stroke="#666" stroke-width="1"/>
<rect x="540.5" y="283.0" width="4" height="27.0" fill="#22ee38" stroke="#0c5c12" stroke-width="0.9"/>
<line x1="550.5" y1="261.0" x2="550.5" y2="292.5" stroke="#666" stroke-width="1"/>
<rect x="548.5" y="265.7" width="4" height="16.8" fill="#22ee38" stroke="#0c5c12" stroke-width="0.9"/>
<line x1="557.5" y1="262.0" x2="557.5" y2="286.0" stroke="#666" stroke-width="1"/>
<rect x="555.5" y="265.7" width="4" height="8.3" fill="#cc0505" stroke="#6a0000" stroke-width="0.9"/>
<line x1="565.5" y1="263.7" x2="565.5" y2="320.5" stroke="#666" stroke-width="1"/>
<rect x="563.5" y="271.7" width="4" height="48.8" fill="#cc0505" stroke="#6a0000" stroke-width="0.9"/>
<line x1="572.5" y1="283.7" x2="572.5" y2="321.0" stroke="#666" stroke-width="1"/>
<rect x="570.5" y="286.7" width="4" height="32.8" fill="#22ee38" stroke="#0c5c12" stroke-width="0.9"/>
<line x1="580.5" y1="277.5" x2="580.5" y2="308.0" stroke="#666" stroke-width="1"/>
<rect x="578.5" y="285.7" width="4" height="13.8" fill="#cc0505" stroke="#6a0000" stroke-width="0.9"/>
<line x1="587.5" y1="293.0" x2="587.5" y2="310.0" stroke="#666" stroke-width="1"/>
<rect x="585.5" y="298.0" width="4" height="5.7" fill="#cc0505" stroke="#6a0000" stroke-width="0.9"/>
<line x1="594.5" y1="291.0" x2="594.5" y2="325.5" stroke="#666" stroke-width="1"/>
<rect x="592.5" y="301.7" width="4" height="5.8" fill="#cc0505" stroke="#6a0000" stroke-width="0.9"/>
<line x1="602.5" y1="303.7" x2="602.5" y2="330.7" stroke="#666" stroke-width="1"/>
<rect x="600.5" y="305.7" width="4" height="12.3" fill="#cc0505" stroke="#6a0000" stroke-width="0.9"/>
<line x1="609.5" y1="303.0" x2="609.5" y2="332.5" stroke="#666" stroke-width="1"/>
<rect x="607.5" y="310.0" width="4" height="6.0" fill="#22ee38" stroke="#0c5c12" stroke-width="0.9"/>
<line x1="617.5" y1="289.0" x2="617.5" y2="329.0" stroke="#666" stroke-width="1"/>
<rect x="615.5" y="310.0" width="4" height="13.0" fill="#cc0505" stroke="#6a0000" stroke-width="0.9"/>
<line x1="624.5" y1="313.0" x2="624.5" y2="331.0" stroke="#666" stroke-width="1"/>
<rect x="622.5" y="321.7" width="4" height="1.6" fill="#22ee38" stroke="#0c5c12" stroke-width="0.9"/>
<line x1="631.5" y1="296.0" x2="631.5" y2="325.5" stroke="#666" stroke-width="1"/>
<rect x="629.5" y="307.0" width="4" height="11.0" fill="#22ee38" stroke="#0c5c12" stroke-width="0.9"/>
<line x1="639.5" y1="283.0" x2="639.5" y2="322.0" stroke="#666" stroke-width="1"/>
<rect x="637.5" y="298.0" width="4" height="6.5" fill="#22ee38" stroke="#0c5c12" stroke-width="0.9"/>
<line x1="646.5" y1="277.5" x2="646.5" y2="320.7" stroke="#666" stroke-width="1"/>
<rect x="644.5" y="283.0" width="4" height="14.5" fill="#22ee38" stroke="#0c5c12" stroke-width="0.9"/>
<line x1="654.5" y1="255.0" x2="654.5" y2="282.5" stroke="#666" stroke-width="1"/>
<rect x="652.5" y="259.0" width="4" height="22.7" fill="#22ee38" stroke="#0c5c12" stroke-width="0.9"/>
<line x1="661.5" y1="245.0" x2="661.5" y2="277.5" stroke="#666" stroke-width="1"/>
<rect x="659.5" y="257.5" width="4" height="10.5" fill="#cc0505" stroke="#6a0000" stroke-width="0.9"/>
<line x1="669.5" y1="251.0" x2="669.5" y2="273.0" stroke="#666" stroke-width="1"/>
<rect x="667.5" y="269.0" width="4" height="2.0" fill="#22ee38" stroke="#0c5c12" stroke-width="0.9"/>
<line x1="676.5" y1="253.7" x2="676.5" y2="276.0" stroke="#666" stroke-width="1"/>
<rect x="674.5" y="269.0" width="4" height="4.0" fill="#cc0505" stroke="#6a0000" stroke-width="0.9"/>
<line x1="683.5" y1="250.5" x2="683.5" y2="287.5" stroke="#666" stroke-width="1"/>
<rect x="681.5" y="271.0" width="4" height="16.5" fill="#cc0505" stroke="#6a0000" stroke-width="0.9"/>
<line x1="691.5" y1="273.5" x2="691.5" y2="291.0" stroke="#666" stroke-width="1"/>
<rect x="689.5" y="285.5" width="4" height="2.5" fill="#cc0505" stroke="#6a0000" stroke-width="0.9"/>
<line x1="698.5" y1="286.0" x2="698.5" y2="331.0" stroke="#666" stroke-width="1"/>
<rect x="696.5" y="287.0" width="4" height="41.0" fill="#cc0505" stroke="#6a0000" stroke-width="0.9"/>
<line x1="706.5" y1="322.5" x2="706.5" y2="341.7" stroke="#666" stroke-width="1"/>
<rect x="704.5" y="327.0" width="4" height="14.7" fill="#cc0505" stroke="#6a0000" stroke-width="0.9"/>
<line x1="713.5" y1="337.0" x2="713.5" y2="356.0" stroke="#666" stroke-width="1"/>
<rect x="711.5" y="339.5" width="4" height="11.5" fill="#cc0505" stroke="#6a0000" stroke-width="0.9"/>
<line x1="720.5" y1="331.7" x2="720.5" y2="357.5" stroke="#666" stroke-width="1"/>
<rect x="718.5" y="341.0" width="4" height="9.5" fill="#22ee38" stroke="#0c5c12" stroke-width="0.9"/>
<line x1="728.5" y1="333.7" x2="728.5" y2="347.5" stroke="#666" stroke-width="1"/>
<rect x="726.5" y="339.5" width="4" height="6.5" fill="#cc0505" stroke="#6a0000" stroke-width="0.9"/>
<line x1="735.5" y1="303.7" x2="735.5" y2="345.5" stroke="#666" stroke-width="1"/>
<rect x="733.5" y="311.0" width="4" height="34.5" fill="#22ee38" stroke="#0c5c12" stroke-width="0.9"/>
<line x1="743.5" y1="305.0" x2="743.5" y2="323.0" stroke="#666" stroke-width="1"/>
<rect x="741.5" y="308.7" width="4" height="10.8" fill="#cc0505" stroke="#6a0000" stroke-width="0.9"/>
<line x1="750.5" y1="313.7" x2="750.5" y2="357.0" stroke="#666" stroke-width="1"/>
<rect x="748.5" y="319.0" width="4" height="38.0" fill="#cc0505" stroke="#6a0000" stroke-width="0.9"/>
<line x1="757.5" y1="336.7" x2="757.5" y2="364.5" stroke="#666" stroke-width="1"/>
<rect x="755.5" y="355.0" width="4" height="1.6" fill="#22ee38" stroke="#0c5c12" stroke-width="0.9"/>
<line x1="765.5" y1="351.0" x2="765.5" y2="379.5" stroke="#666" stroke-width="1"/>
<rect x="763.5" y="355.0" width="4" height="20.5" fill="#cc0505" stroke="#6a0000" stroke-width="0.9"/>
<line x1="772.5" y1="357.0" x2="772.5" y2="380.5" stroke="#666" stroke-width="1"/>
<rect x="770.5" y="363.0" width="4" height="12.5" fill="#22ee38" stroke="#0c5c12" stroke-width="0.9"/>
<line x1="780.5" y1="333.0" x2="780.5" y2="365.0" stroke="#666" stroke-width="1"/>
<rect x="778.5" y="337.0" width="4" height="27.5" fill="#22ee38" stroke="#0c5c12" stroke-width="0.9"/>
<line x1="787.5" y1="325.0" x2="787.5" y2="346.0" stroke="#666" stroke-width="1"/>
<rect x="785.5" y="331.7" width="4" height="4.3" fill="#22ee38" stroke="#0c5c12" stroke-width="0.9"/>
<line x1="795.5" y1="319.5" x2="795.5" y2="346.0" stroke="#666" stroke-width="1"/>
<rect x="793.5" y="323.0" width="4" height="8.0" fill="#22ee38" stroke="#0c5c12" stroke-width="0.9"/>
<line x1="802.5" y1="317.0" x2="802.5" y2="335.5" stroke="#666" stroke-width="1"/>
<rect x="800.5" y="321.7" width="4" height="12.3" fill="#cc0505" stroke="#6a0000" stroke-width="0.9"/>
<line x1="809.5" y1="303.7" x2="809.5" y2="341.7" stroke="#666" stroke-width="1"/>
<rect x="807.5" y="310.0" width="4" height="22.0" fill="#22ee38" stroke="#0c5c12" stroke-width="0.9"/>
<line x1="817.5" y1="299.5" x2="817.5" y2="315.5" stroke="#666" stroke-width="1"/>
<rect x="815.5" y="308.7" width="4" height="1.6" fill="#22ee38" stroke="#0c5c12" stroke-width="0.9"/>
<line x1="824.5" y1="279.0" x2="824.5" y2="308.7" stroke="#666" stroke-width="1"/>
<rect x="822.5" y="301.7" width="4" height="6.3" fill="#22ee38" stroke="#0c5c12" stroke-width="0.9"/>
<line x1="832.5" y1="273.0" x2="832.5" y2="309.5" stroke="#666" stroke-width="1"/>
<rect x="830.5" y="285.7" width="4" height="16.0" fill="#22ee38" stroke="#0c5c12" stroke-width="0.9"/>
<line x1="839.5" y1="263.0" x2="839.5" y2="286.0" stroke="#666" stroke-width="1"/>
<rect x="837.5" y="265.5" width="4" height="20.0" fill="#22ee38" stroke="#0c5c12" stroke-width="0.9"/>
<line x1="846.5" y1="246.0" x2="846.5" y2="269.5" stroke="#666" stroke-width="1"/>
<rect x="844.5" y="261.0" width="4" height="4.5" fill="#22ee38" stroke="#0c5c12" stroke-width="0.9"/>
<line x1="854.5" y1="257.5" x2="854.5" y2="275.5" stroke="#666" stroke-width="1"/>
<rect x="852.5" y="263.0" width="4" height="6.5" fill="#cc0505" stroke="#6a0000" stroke-width="0.9"/>
<line x1="861.5" y1="258.7" x2="861.5" y2="285.0" stroke="#666" stroke-width="1"/>
<rect x="859.5" y="267.5" width="4" height="17.5" fill="#cc0505" stroke="#6a0000" stroke-width="0.9"/>
<line x1="869.5" y1="277.0" x2="869.5" y2="305.0" stroke="#666" stroke-width="1"/>
<rect x="867.5" y="283.7" width="4" height="15.8" fill="#cc0505" stroke="#6a0000" stroke-width="0.9"/>
<line x1="876.5" y1="282.5" x2="876.5" y2="303.7" stroke="#666" stroke-width="1"/>
<rect x="874.5" y="292.0" width="4" height="5.5" fill="#22ee38" stroke="#0c5c12" stroke-width="0.9"/>
<line x1="884.5" y1="277.5" x2="884.5" y2="300.5" stroke="#666" stroke-width="1"/>
<rect x="882.5" y="292.0" width="4" height="6.0" fill="#cc0505" stroke="#6a0000" stroke-width="0.9"/>
<line x1="891.5" y1="295.0" x2="891.5" y2="322.5" stroke="#666" stroke-width="1"/>
<rect x="889.5" y="299.0" width="4" height="3.5" fill="#cc0505" stroke="#6a0000" stroke-width="0.9"/>
<line x1="898.5" y1="280.5" x2="898.5" y2="305.5" stroke="#666" stroke-width="1"/>
<rect x="896.5" y="299.0" width="4" height="6.5" fill="#cc0505" stroke="#6a0000" stroke-width="0.9"/>
<line x1="906.5" y1="287.5" x2="906.5" y2="305.7" stroke="#666" stroke-width="1"/>
<rect x="904.5" y="298.0" width="4" height="5.7" fill="#22ee38" stroke="#0c5c12" stroke-width="0.9"/>
<line x1="913.5" y1="293.0" x2="913.5" y2="332.5" stroke="#666" stroke-width="1"/>
<rect x="911.5" y="297.0" width="4" height="28.7" fill="#cc0505" stroke="#6a0000" stroke-width="0.9"/>
<line x1="921.5" y1="311.0" x2="921.5" y2="347.5" stroke="#666" stroke-width="1"/>
<rect x="919.5" y="327.0" width="4" height="20.5" fill="#cc0505" stroke="#6a0000" stroke-width="0.9"/>
<line x1="928.5" y1="340.5" x2="928.5" y2="360.5" stroke="#666" stroke-width="1"/>
<rect x="926.5" y="343.0" width="4" height="4.5" fill="#cc0505" stroke="#6a0000" stroke-width="0.9"/>
<line x1="935.5" y1="333.0" x2="935.5" y2="352.5" stroke="#666" stroke-width="1"/>
<rect x="933.5" y="347.0" width="4" height="1.6" fill="#cc0505" stroke="#6a0000" stroke-width="0.9"/>
<line x1="943.5" y1="329.5" x2="943.5" y2="369.5" stroke="#666" stroke-width="1"/>
<rect x="941.5" y="347.0" width="4" height="22.5" fill="#cc0505" stroke="#6a0000" stroke-width="0.9"/>
<line x1="950.5" y1="333.0" x2="950.5" y2="369.5" stroke="#666" stroke-width="1"/>
<rect x="948.5" y="341.0" width="4" height="28.5" fill="#22ee38" stroke="#0c5c12" stroke-width="0.9"/>
<line x1="958.5" y1="333.7" x2="958.5" y2="360.7" stroke="#666" stroke-width="1"/>
<rect x="956.5" y="340.0" width="4" height="13.0" fill="#cc0505" stroke="#6a0000" stroke-width="0.9"/>
<line x1="965.5" y1="345.0" x2="965.5" y2="370.0" stroke="#666" stroke-width="1"/>
<rect x="963.5" y="348.0" width="4" height="16.0" fill="#cc0505" stroke="#6a0000" stroke-width="0.9"/>
<line x1="973.5" y1="359.0" x2="973.5" y2="378.0" stroke="#666" stroke-width="1"/>
<rect x="971.5" y="363.0" width="4" height="9.3" fill="#cc0505" stroke="#6a0000" stroke-width="0.9"/>
<line x1="980.5" y1="365.0" x2="980.5" y2="421.0" stroke="#666" stroke-width="1"/>
<rect x="978.5" y="370.0" width="4" height="49.5" fill="#cc0505" stroke="#6a0000" stroke-width="0.9"/>
<line x1="987.5" y1="409.5" x2="987.5" y2="436.7" stroke="#666" stroke-width="1"/>
<rect x="985.5" y="417.5" width="4" height="10.0" fill="#cc0505" stroke="#6a0000" stroke-width="0.9"/>
<line x1="995.5" y1="411.0" x2="995.5" y2="436.7" stroke="#666" stroke-width="1"/>
<rect x="993.5" y="418.7" width="4" height="8.3" fill="#22ee38" stroke="#0c5c12" stroke-width="0.9"/>
<line x1="1002.5" y1="393.7" x2="1002.5" y2="422.5" stroke="#666" stroke-width="1"/>
<rect x="1000.5" y="405.0" width="4" height="15.7" fill="#22ee38" stroke="#0c5c12" stroke-width="0.9"/>
<line x1="1010.5" y1="403.0" x2="1010.5" y2="426.0" stroke="#666" stroke-width="1"/>
<rect x="1008.5" y="403.0" width="4" height="15.0" fill="#cc0505" stroke="#6a0000" stroke-width="0.9"/>
<line x1="1017.5" y1="412.5" x2="1017.5" y2="455.0" stroke="#666" stroke-width="1"/>
<rect x="1015.5" y="413.7" width="4" height="26.3" fill="#cc0505" stroke="#6a0000" stroke-width="0.9"/>
<line x1="1024.5" y1="431.0" x2="1024.5" y2="444.0" stroke="#666" stroke-width="1"/>
<rect x="1022.5" y="440.0" width="4" height="4.0" fill="#cc0505" stroke="#6a0000" stroke-width="0.9"/>
<line x1="1032.5" y1="423.7" x2="1032.5" y2="448.7" stroke="#666" stroke-width="1"/>
<rect x="1030.5" y="433.7" width="4" height="10.0" fill="#22ee38" stroke="#0c5c12" stroke-width="0.9"/>
<line x1="1039.5" y1="423.0" x2="1039.5" y2="443.7" stroke="#666" stroke-width="1"/>
<rect x="1037.5" y="431.7" width="4" height="12.0" fill="#cc0505" stroke="#6a0000" stroke-width="0.9"/>
<line x1="1047.5" y1="432.5" x2="1047.5" y2="458.0" stroke="#666" stroke-width="1"/>
<rect x="1045.5" y="440.7" width="4" height="16.0" fill="#cc0505" stroke="#6a0000" stroke-width="0.9"/>
<line x1="1054.5" y1="417.0" x2="1054.5" y2="456.7" stroke="#666" stroke-width="1"/>
<rect x="1052.5" y="420.0" width="4" height="36.7" fill="#22ee38" stroke="#0c5c12" stroke-width="0.9"/>
<line x1="1062.5" y1="402.0" x2="1062.5" y2="425.0" stroke="#666" stroke-width="1"/>
<rect x="1060.5" y="418.7" width="4" height="1.6" fill="#22ee38" stroke="#0c5c12" stroke-width="0.9"/>
<line x1="1069.5" y1="405.5" x2="1069.5" y2="423.0" stroke="#666" stroke-width="1"/>
<rect x="1067.5" y="415.5" width="4" height="1.6" fill="#22ee38" stroke="#0c5c12" stroke-width="0.9"/>
<line x1="1076.5" y1="405.0" x2="1076.5" y2="431.7" stroke="#666" stroke-width="1"/>
<rect x="1074.5" y="411.0" width="4" height="7.7" fill="#22ee38" stroke="#0c5c12" stroke-width="0.9"/>
<line x1="1084.5" y1="377.9" x2="1084.5" y2="411.9" stroke="#666" stroke-width="1"/>
<rect x="1082.5" y="398.7" width="4" height="11.6" fill="#22ee38" stroke="#0c5c12" stroke-width="0.9"/>
<line x1="1091.5" y1="378.7" x2="1091.5" y2="397.0" stroke="#666" stroke-width="1"/>
<rect x="1089.5" y="388.7" width="4" height="8.3" fill="#22ee38" stroke="#0c5c12" stroke-width="0.9"/>
<line x1="1099.5" y1="378.7" x2="1099.5" y2="405.5" stroke="#666" stroke-width="1"/>
<rect x="1097.5" y="388.7" width="4" height="16.8" fill="#cc0505" stroke="#6a0000" stroke-width="0.9"/>
<line x1="1106.5" y1="385.0" x2="1106.5" y2="403.7" stroke="#666" stroke-width="1"/>
<rect x="1104.5" y="390.0" width="4" height="13.7" fill="#22ee38" stroke="#0c5c12" stroke-width="0.9"/>
<line x1="1113.5" y1="378.7" x2="1113.5" y2="395.5" stroke="#666" stroke-width="1"/>
<rect x="1111.5" y="383.0" width="4" height="12.5" fill="#22ee38" stroke="#0c5c12" stroke-width="0.9"/>
<line x1="342.7" y1="55.7" x2="1152" y2="361" stroke="#1414b4" stroke-width="2.35" stroke-linecap="round"/>
</svg>
<div class="abs" style="left:70.3px;top:596.3px;white-space:nowrap;color:#111"><span style="font-size:22.8px;font-weight:bold;letter-spacing:-1.1px;-webkit-text-stroke:.45px #111">Investing</span><span style="font-size:15px;letter-spacing:-.6px">.com</span><i style="position:absolute;left:64.3px;top:3.2px;width:4.5px;height:4.5px;background:#f5a30a;border-radius:0 3px 0 0;transform:rotate(20deg)"></i></div>
<!-- sidebar icons -->
<div class="abs" style="left:0;top:422.5px;width:52px;height:1px;background:#e9ecef"></div>
<div class="abs" style="left:0;top:510px;width:52px;height:1px;background:#e9ecef"></div>
<div class="abs" style="left:5px;top:517px;width:42px;height:35px;background:#eef2f5;border-radius:2px"></div>
<svg class="abs" style="left:12.2px;top:119.3px" width="28" height="28" viewBox="0 0 28 28"><path d="M14 3V10M14 18V25M3 14H10.5M18 14H25.5" stroke="#4fb8d4" stroke-width="1.2"/></svg>
<svg class="abs" style="left:12px;top:156px" width="28" height="28" viewBox="0 0 28 28"><path d="M7.5 21.5L12.5 16M15.5 12.5L24 3.5" stroke="#666a6e" stroke-width="1.2"/><circle cx="6" cy="23" r="2" fill="none" stroke="#666a6e" stroke-width="1.1"/><circle cx="14" cy="14.3" r="2" fill="none" stroke="#666a6e" stroke-width="1.1"/></svg>
<svg class="abs" style="left:12px;top:195px" width="28" height="28" viewBox="0 0 28 28"><g stroke="#666a6e" stroke-width="1.1" fill="none"><path d="M7 10.5L13.5 3.5M7 13L15.2 22M6.6 22L19.1 9.4M17.7 22L24.7 14.5"/><circle cx="5.8" cy="11.7" r="1.8" fill="#fff"/><circle cx="5.3" cy="23.2" r="1.8" fill="#fff"/><circle cx="16.4" cy="23.2" r="1.8" fill="#fff"/></g></svg>
<svg class="abs" style="left:12px;top:234px" width="28" height="28" viewBox="0 0 28 28"><g stroke="#666a6e" stroke-width="1.1" fill="none" stroke-linejoin="round"><path d="M3.1 22L14.2 10.9C17 11.2 18.6 13.5 18.2 16.2C17.8 19 16.5 21 15.8 22Z"/><path d="M19.1 7.1C19 9.5 20 11 21.3 11.1C23.5 10.8 25.5 8 27.5 6"/></g></svg>
<svg class="abs" style="left:12px;top:272px" width="28" height="28" viewBox="0 0 28 28"><path d="M8.5 8V5.5H21V8M14.7 5.5V22M12 22H17.5" stroke="#666a6e" stroke-width="1.1" fill="none"/></svg>
<svg class="abs" style="left:12px;top:309px" width="28" height="28" viewBox="0 0 28 28"><g stroke="#666a6e" stroke-width="1.1" fill="none"><path d="M5.5 21L8 7L14 14L20 7L23.5 20L14 14Z"/><circle cx="8" cy="6" r="1.8" fill="#fff"/><circle cx="20" cy="6" r="1.8" fill="#fff"/><circle cx="5" cy="22" r="1.8" fill="#fff"/><circle cx="23.5" cy="21" r="1.8" fill="#fff"/><circle cx="14" cy="14" r="1.8" fill="#fff"/></g></svg>
<svg class="abs" style="left:12px;top:347px" width="28" height="28" viewBox="0 0 28 28"><g stroke="#666a6e" stroke-width="1.1" fill="none"><path d="M5.5 5.8H24M5.5 16.4H23M5.5 23.6H24M14.5 8.5V21M12.3 10.7L14.5 8.5L16.7 10.7M12.3 18.8L14.5 21L16.7 18.8"/><circle cx="4.2" cy="5.8" r="1.7" fill="#fff"/><circle cx="4.2" cy="16.4" r="1.7" fill="#fff"/><circle cx="24.6" cy="16.4" r="1.7" fill="#fff"/><circle cx="4.2" cy="23.6" r="1.7" fill="#fff"/></g></svg>
<svg class="abs" style="left:12px;top:385px" width="28" height="28" viewBox="0 0 28 28"><path d="M22 14H10M14.5 8L8.5 14L14.5 20" stroke="#6b7076" stroke-width="3.3" fill="none" stroke-linecap="round" stroke-linejoin="round"/></svg>
<svg class="abs" style="left:12px;top:434px" width="28" height="28" viewBox="0 0 28 28"><g stroke="#666a6e" stroke-width="1.1" fill="none"><path d="M4 9V24H26M4 20H26M8 20V22M12 20V22M16 20V22M20 20V22M24 20V22"/><rect x="9.5" y="7" width="3" height="7"/><rect x="17" y="5" width="3" height="7"/><path d="M11 3V7M11 14V17M18.5 1V5M18.5 12V15"/></g></svg>
<svg class="abs" style="left:12px;top:471px" width="28" height="28" viewBox="0 0 28 28"><g stroke="#666a6e" stroke-width="1.2" fill="none"><circle cx="13" cy="13" r="8"/><path d="M19 19L24 24M9.5 13H16.5M13 9.5V16.5"/></g></svg>
<svg class="abs" style="left:12px;top:521px" width="28" height="28" viewBox="0 0 28 28"><g stroke="#45b4d4" stroke-width="1.15" fill="none"><path d="M6 23V13A8 8 0 0 1 22 13V23H17.5V13A3.5 3.5 0 0 0 10.5 13V23Z"/><path d="M6 18H10.5M17.5 18H22"/></g></svg>
<svg class="abs" style="left:12px;top:559px" width="28" height="28" viewBox="0 0 28 28"><g stroke="#666a6e" stroke-width="1.1" fill="none"><path d="M4 18L16 4L21 8L9 21L3.5 22.5ZM14 6.5L19 10.5M5 17.5L9 20.5"/><rect x="16.5" y="18" width="8" height="6.5" fill="#fff"/><path d="M18.5 18V16A2.2 2.2 0 0 1 22.8 15.5"/><path d="M20.5 20.5V22"/></g></svg>
<svg class="abs" style="left:12px;top:597px" width="28" height="28" viewBox="0 0 28 28"><g stroke="#666a6e" stroke-width="1.2" fill="none"><rect x="6" y="12" width="16" height="12" rx="1.5"/><path d="M10 12V8A4.5 4.5 0 0 1 18.5 6"/><path d="M14 17V20" stroke-width="1.8"/></g></svg>
<svg class="abs" style="left:12px;top:635px" width="28" height="28" viewBox="0 0 28 28"><path d="M4.200 14.500C8 5.800 20 5.800 23.800 14.500C20 22.800 8 22.800 4.200 14.500Z" stroke="#666a6e" stroke-width="1.100" fill="none"/><circle cx="14" cy="14.300" r="3.200" fill="#7a7e83"/></svg>
<div id="sidebtn" class="abs"><svg style="position:absolute;left:17px;top:6px" width="18" height="11" viewBox="0 0 18 11"><path d="M1 1.5L9 9.5L17 1.5" stroke="#fff" stroke-width="1.6" fill="none"/></svg></div>
<div class="abs" style="left:54px;top:390px;width:3px;height:12px;border-radius:1.5px;background:#cdd1d5"></div>
<div class="abs" style="left:1259px;top:384px;width:0;height:0;border-top:4px solid transparent;border-bottom:4px solid transparent;border-right:4px solid #cdd1d5"></div>
<!-- mouse hand cursor -->
<svg class="abs" style="left:1133px;top:537px" width="18" height="24" viewBox="0 0 18 24"><path d="M6 1.5a1.4 1.4 0 0 1 2.8 0V9l.4-2a1.3 1.3 0 0 1 2.5.4l.3-.8a1.2 1.2 0 0 1 2.3.7l.3-.3a1.1 1.1 0 0 1 2 .9V16c0 3-2 6.500-5 6.500H9C6 22.500 5 20 3.500 17.500L1 13.500c-.8-1.500 1.200-2.500 2.200-1.200L6 15Z" fill="#fff" stroke="#2a2a2a" stroke-width="0.9" stroke-linejoin="round"/></svg>

<div id="bottomblack" class="abs"></div>
<div class="abs" style="left:1013px;top:106px;width:11px;height:4px;background:#e0304a;border-radius:5px 5px 0 0"></div>
</body></html>
